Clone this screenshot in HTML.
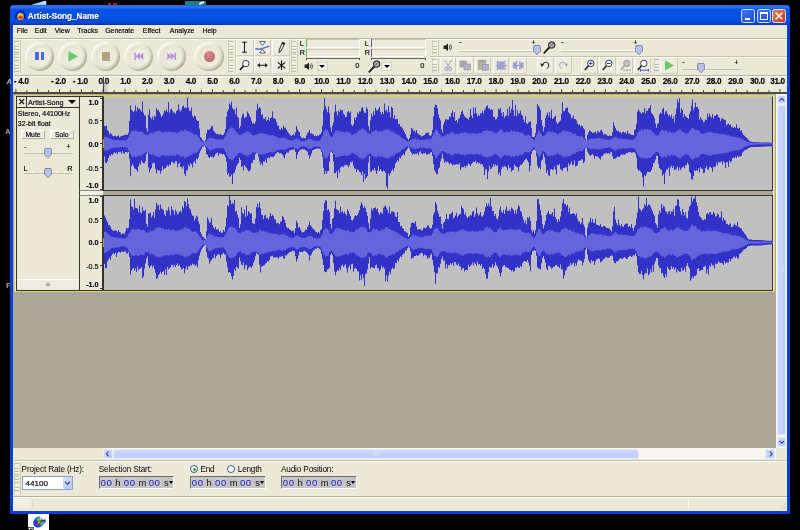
<!DOCTYPE html>
<html><head><meta charset="utf-8"><title>Artist-Song_Name</title>
<style>
html,body{margin:0;padding:0;background:#000;}
body{width:800px;height:530px;position:relative;overflow:hidden;font-family:"Liberation Sans",sans-serif;font-size:8px;color:#000;}
div,span,svg{position:absolute;box-sizing:border-box;}
.t{white-space:nowrap;line-height:1;-webkit-text-stroke:0.16px currentColor;}
.win{left:10.3px;top:5px;width:779.5px;height:508.8px;background:#0a3fd8;border-radius:4px 4px 0 0;}
.title{left:0;top:0;width:779.5px;height:20px;border-radius:4px 4px 0 0;background:linear-gradient(#1c5ce6 0%,#2f78f4 9%,#0a4ee0 24%,#0650e8 42%,#0552e6 70%,#0446d0 88%,#0336b4 100%);}
.client{left:13.2px;top:25px;width:773.8px;height:485.5px;background:#ece9d8;}
.menu span{top:28.5px;font-size:8.3px;}
.hl{height:1px;background:#b8b5a4;}
.hl2{height:1px;background:#fbfaf4;}
.grab{width:3.6px;background:repeating-linear-gradient(#bcb9a8 0px,#bcb9a8 0.8px,#faf9f2 0.8px,#faf9f2 1.6px,#ece9d8 1.6px,#ece9d8 2.7px);}
.cbtn{width:29.4px;height:29.4px;border-radius:50%;background:#ece9d8;box-shadow:inset 1.3px 1.3px 1.8px rgba(255,255,255,.95),inset -1.6px -1.6px 2.8px rgba(105,100,80,.5);}
.cbtn:after{content:"";position:absolute;left:4.6px;top:4.6px;width:20.2px;height:20.2px;border-radius:50%;background:radial-gradient(circle at 50% 50%,#f0eee2 0%,#edeadb 70%,#e9e6d6 100%);box-shadow:inset 1px 1px 2px rgba(120,115,95,.12),inset -1px -1px 2px rgba(255,255,255,.35);}
.tool{width:17.6px;height:17.2px;background:#efecdf;border:0.8px solid #cfccbb;border-top-color:#fdfdf8;border-left-color:#fdfdf8;}
.ebtn{width:16.8px;height:17.2px;background:#efecdf;border:0.8px solid #cfccbb;border-top-color:#fdfdfa;border-left-color:#fdfdfa;}
.meter{height:8.5px;background:#eeebdc;border:0.7px solid #c8c5b4;border-bottom-color:#fff;border-right-color:#fff;}
.sl{height:1px;background:#b9b6a6;}
.dd{width:11px;height:9px;background:#f3f1e7;border:0.6px solid #d6d2c2;}
.dd:after{content:"";position:absolute;left:1.9px;top:2.4px;border:3.1px solid transparent;border-top:3.6px solid #000;border-bottom:0;}
.tbox{height:12px;background:#c4c4c4;border:1px solid #77756a;border-right-color:#f8f8f4;border-bottom-color:#f8f8f4;font-size:8.6px;}
.tbox span{top:1.5px;}
.tbox .d{color:#3232c8;background:#d4d4dc;height:8.6px;}
.lbl{font-size:8.2px;}
.vr{font-size:7.6px;text-align:right;width:20px;}
.rl{font-size:7.3px;font-weight:bold;top:77.5px;letter-spacing:-0.1px}
</style></head><body><div id="root" style="left:0;top:0;width:800px;height:530px;will-change:transform">

<svg style="left:28px;top:0" width="20" height="6" viewBox="0 0 20 6"><path d="M0.6 6L6 4L12 2.2L17 0.8Q18.6 0.8 18.4 3L18 6Z" fill="#a4d2f2"/><path d="M13 2.2L17.4 1.2L17.6 3.4Z" fill="#e8f4fc"/></svg>
<div style="left:107.6px;top:2.8px;width:3px;height:2.2px;background:#b81c1c"></div><div style="left:113.4px;top:2.8px;width:3.4px;height:2.2px;background:#b81c1c"></div>
<div style="left:185px;top:0.6px;width:21px;height:4.6px;background:#1c827e"></div>
<div style="left:199px;top:1.6px;width:5px;height:1.6px;background:#e8ffff;transform:rotate(-25deg)"></div>
<div style="left:27.8px;top:514px;width:21px;height:16px;background:#fff"></div>
<svg style="left:27.8px;top:514px" width="21" height="16" viewBox="0 0 21 16"><path d="M5.2 9.6Q5 5.6 8.4 3.4Q10.4 2 12 2.6L10.4 6.2Q13 5.2 16.4 6L17.8 5.4Q18.4 7.6 16.4 9.2Q14.4 12.6 10.8 13.4Q8.6 14 7.6 12.8Q5.4 12.2 5.2 9.6Z" fill="#1d3fe0"/><path d="M8.6 4.4Q11 2.6 12.6 4.2L11.2 7Q9.6 7.6 8.4 6.6Z" fill="#3ccf58"/><path d="M11.6 9.8Q14 7 16.6 7.2Q16.4 9.6 14.2 11.2Q12.6 11.8 11.6 9.8Z" fill="#3ccf58"/><path d="M8.6 11L13.6 5.6" stroke="#e8402a" stroke-width="1.6"/><path d="M10.4 9L12 7.4" stroke="#f6c020" stroke-width="1.2"/><path d="M13.2 3.4L14.8 6.8L17.4 4.6" stroke="#30343c" stroke-width="0.6" fill="none"/><rect x="0.4" y="13.6" width="5.2" height="2.4" fill="#fff" stroke="#222" stroke-width="0.7"/><rect x="2" y="14.6" width="2.6" height="1.4" fill="#222"/></svg>
<div class="win"><div class="title"></div></div>
<div class="t" style="left:6.8px;top:78.00px;font-size:7px;color:#d0d0d0;font-style:italic;">A</div>
<div class="t" style="left:5.6px;top:128.00px;font-size:7px;color:#c0c0c0;">A</div>
<div class="t" style="left:6.2px;top:282.00px;font-size:7px;color:#d0d0d0;">F</div>
<svg style="left:14.5px;top:10px" width="11" height="11" viewBox="0 0 11 11">
<path d="M1.2 8.5 V5.5 A4.3 4.3 0 0 1 9.8 5.5 V8.5" fill="none" stroke="#0a1a9a" stroke-width="1.5"/>
<rect x="0.3" y="5.6" width="2.2" height="3.6" rx="1" fill="#10209a"/><rect x="8.5" y="5.6" width="2.2" height="3.6" rx="1" fill="#10209a"/>
<ellipse cx="5.5" cy="6.6" rx="3.2" ry="3.4" fill="#f6d21c"/><ellipse cx="5.5" cy="7.2" rx="2.5" ry="2" fill="#f0541a"/><ellipse cx="5.5" cy="7.4" rx="1.6" ry="1" fill="#e81a1a"/></svg>
<div class="t" style="left:27.8px;top:13.00px;font-size:8.15px;font-weight:bold;color:#fff;text-shadow:0.6px 0.7px 0.4px #0a2a90;">Artist-Song_Name</div>
<div style="left:741px;top:9px;width:14px;height:14px;border-radius:2.4px;border:0.75px solid #d2e0fc;background:linear-gradient(135deg,#3c78ee,#1c4ad0)"><div style="left:3px;top:8.2px;width:4.6px;height:2px;background:#fff"></div></div>
<div style="left:756.7px;top:9px;width:14px;height:14px;border-radius:2.4px;border:0.75px solid #d2e0fc;background:linear-gradient(135deg,#3c78ee,#1c4ad0)"><div style="left:2.6px;top:2.4px;width:7.4px;height:7.4px;border:0.9px solid #fff;border-top-width:2px"></div></div>
<div style="left:772px;top:9px;width:14px;height:14px;border-radius:2.4px;border:0.75px solid #d2e0fc;background:linear-gradient(135deg,#e8805a,#c8381a)"><svg style="left:2.3px;top:2.3px" width="8" height="8" viewBox="0 0 8 8"><path d="M0.7 0.7L7.3 7.3M7.3 0.7L0.7 7.3" stroke="#fff" stroke-width="1.5"/></svg></div>
<div class="client"></div>
<div class="t" style="left:16.8px;top:28.00px;font-size:6.95px;">File</div>
<div class="t" style="left:34.8px;top:28.00px;font-size:6.95px;">Edit</div>
<div class="t" style="left:54.8px;top:28.00px;font-size:6.95px;">View</div>
<div class="t" style="left:77.3px;top:28.00px;font-size:6.95px;">Tracks</div>
<div class="t" style="left:105.2px;top:28.00px;font-size:6.95px;">Generate</div>
<div class="t" style="left:142.8px;top:28.00px;font-size:6.95px;">Effect</div>
<div class="t" style="left:169.8px;top:28.00px;font-size:6.95px;">Analyze</div>
<div class="t" style="left:202.4px;top:28.00px;font-size:6.95px;">Help</div>
<div class="hl" style="left:13.5px;top:38px;width:773.5px"></div>
<div class="hl2" style="left:13.5px;top:39px;width:773.5px"></div>
<div class="hl" style="left:13.5px;top:74.8px;width:773.5px"></div>
<div class="hl2" style="left:13.5px;top:75.8px;width:773.5px"></div>
<div class="hl" style="left:430px;top:56px;width:357px;background:#c4c1b0"></div>
<div class="hl2" style="left:430px;top:57px;width:357px"></div>
<div class="grab" style="left:15px;top:41px;height:31px"></div>
<div style="left:20.2px;top:40px;width:1px;height:33px;background:#cfccbc"></div>
<div style="left:13.7px;top:40px;width:0.8px;height:33px;background:#cfccbc"></div>
<div class="grab" style="left:229.4px;top:41px;height:31px"></div>
<div style="left:234.6px;top:40px;width:1px;height:33px;background:#cfccbc"></div>
<div style="left:228.1px;top:40px;width:0.8px;height:33px;background:#cfccbc"></div>
<div class="grab" style="left:292px;top:41px;height:31px"></div>
<div style="left:297.2px;top:40px;width:1px;height:33px;background:#cfccbc"></div>
<div style="left:290.7px;top:40px;width:0.8px;height:33px;background:#cfccbc"></div>
<div class="grab" style="left:433px;top:40.6px;height:13.6px"></div>
<div style="left:438.2px;top:39.6px;width:1px;height:15.6px;background:#cfccbc"></div>
<div style="left:431.7px;top:39.6px;width:0.8px;height:15.6px;background:#cfccbc"></div>
<div class="grab" style="left:433px;top:58.8px;height:13.6px"></div>
<div style="left:438.2px;top:57.8px;width:1px;height:15.6px;background:#cfccbc"></div>
<div style="left:431.7px;top:57.8px;width:0.8px;height:15.6px;background:#cfccbc"></div>
<div class="grab" style="left:655px;top:58.8px;height:13.6px"></div>
<div style="left:660.2px;top:57.8px;width:1px;height:15.6px;background:#cfccbc"></div>
<div style="left:653.7px;top:57.8px;width:0.8px;height:15.6px;background:#cfccbc"></div>
<div class="cbtn" style="left:25.0px;top:41.6px"></div>
<div class="cbtn" style="left:58.0px;top:41.6px"></div>
<div class="cbtn" style="left:91.0px;top:41.6px"></div>
<div class="cbtn" style="left:124.0px;top:41.6px"></div>
<div class="cbtn" style="left:157.0px;top:41.6px"></div>
<div class="cbtn" style="left:194.3px;top:41.6px"></div>
<div style="left:35.3px;top:52.4px;width:3.3px;height:7.8px;background:#4668f0"></div><div style="left:40.9px;top:52.4px;width:3.3px;height:7.8px;background:#4668f0"></div>
<svg style="left:67px;top:50px" width="13" height="13" viewBox="0 0 13 13"><path d="M1.4 0.9L11.2 6.3L1.4 11.7Z" fill="#66ca68"/></svg>
<div style="left:101.6px;top:52.4px;width:8.6px;height:8.2px;background:#b2a386"></div>
<svg style="left:133px;top:51.2px" width="11.4" height="10.6" viewBox="0 0 13 11"><rect x="1.6" y="1.3" width="1.7" height="8.4" fill="#ad8fe0"/><path d="M7.6 1.3L3.3 5.5L7.6 9.7Z" fill="#ad8fe0"/><path d="M11.6 1.3L7.3 5.5L11.6 9.7Z" fill="#ad8fe0"/></svg>
<svg style="left:166.2px;top:51.2px" width="11.4" height="10.6" viewBox="0 0 13 11"><rect x="9.7" y="1.3" width="1.7" height="8.4" fill="#ad8fe0"/><path d="M5.4 1.3L9.7 5.5L5.4 9.7Z" fill="#ad8fe0"/><path d="M1.4 1.3L5.7 5.5L1.4 9.7Z" fill="#ad8fe0"/></svg>
<div style="left:204.3px;top:51.4px;width:10.4px;height:10.4px;border-radius:50%;background:radial-gradient(circle at 40% 35%,#cf8a8e,#c4737a 60%,#b8666e)"></div>
<div class="tool" style="left:236px;top:38.8px"></div>
<div class="tool" style="left:253.9px;top:38.8px"></div>
<div class="tool" style="left:272.2px;top:38.8px"></div>
<div class="tool" style="left:236px;top:56.7px"></div>
<div class="tool" style="left:253.9px;top:56.7px"></div>
<div class="tool" style="left:272.2px;top:56.7px"></div>
<svg style="left:236.3px;top:39.4px" width="17" height="16.5" viewBox="0 0 17 16.5"><path d="M6.2 3.2H10.8M6.2 13.2H10.8M8.5 3.2V13.2" stroke="#111" stroke-width="1" fill="none"/></svg>
<svg style="left:254.3px;top:39.2px" width="17" height="16.5" viewBox="0 0 17 16.5"><path d="M5.6 2.6H11.4L8.5 6.4ZM5.6 14H11.4L8.5 10.4Z" fill="#fff" stroke="#222" stroke-width="0.7"/><path d="M1.3 9.8L6 10.2L15.5 7.2" stroke="#5a6ee6" stroke-width="1.4" fill="none"/></svg>
<svg style="left:272.6px;top:39.4px" width="17" height="16.5" viewBox="0 0 17 16.5"><path d="M9.6 3.2L11.8 4.4L8 12L6 13.6L6.2 11Z" fill="#fff" stroke="#111" stroke-width="0.9"/><path d="M9.6 3.2L11.8 4.4L11 6L8.8 4.8Z" fill="#111"/></svg>
<svg style="left:236.3px;top:57.2px" width="17" height="16.5" viewBox="0 0 17 16.5"><circle cx="9.8" cy="6.6" r="3.2" fill="#fff" stroke="#222" stroke-width="0.9"/><path d="M7.5 9L4 13" stroke="#111" stroke-width="1.6"/></svg>
<svg style="left:254.3px;top:57.2px" width="17" height="16.5" viewBox="0 0 17 16.5"><path d="M4.4 8.3H12.6" stroke="#111" stroke-width="1"/><path d="M3.2 8.3L6 6V10.6ZM13.8 8.3L11 6V10.6Z" fill="#111"/></svg>
<svg style="left:272.6px;top:57.2px" width="17" height="16.5" viewBox="0 0 17 16.5"><path d="M8.5 3.6V13M4.8 5.4L12.2 11.2M12.2 5.4L4.8 11.2" stroke="#111" stroke-width="1.1"/></svg>
<div class="t" style="left:299.8px;top:40.00px;font-size:7.2px;">L</div>
<div class="t" style="left:299.8px;top:49.00px;font-size:7.2px;">R</div>
<div class="meter" style="left:306px;top:39px;width:54.4px"></div><div class="meter" style="left:306px;top:48.6px;width:54.4px"></div>
<div style="left:306px;top:39.3px;width:1px;height:8px;background:#58b858"></div><div style="left:306px;top:48.9px;width:1px;height:8px;background:#58b858"></div>
<div class="sl" style="left:306px;top:58px;width:54.4px;background:#66645a"></div><div style="left:306px;top:58px;width:1px;height:2px;background:#55534a"></div><div style="left:359.4px;top:58px;width:1px;height:2px;background:#55534a"></div>
<div class="t" style="left:355.2px;top:62.00px;font-size:7.4px;">0</div>
<div class="t" style="left:364.8px;top:40.00px;font-size:7.2px;">L</div>
<div class="t" style="left:364.8px;top:49.00px;font-size:7.2px;">R</div>
<div class="meter" style="left:371px;top:39px;width:54.7px"></div><div class="meter" style="left:371px;top:48.6px;width:54.7px"></div>
<div style="left:371px;top:39.3px;width:1px;height:8px;background:#7848b8"></div><div style="left:371px;top:48.9px;width:1px;height:8px;background:#7848b8"></div>
<div class="sl" style="left:371px;top:58px;width:54.7px;background:#66645a"></div><div style="left:371px;top:58px;width:1px;height:2px;background:#55534a"></div><div style="left:424.7px;top:58px;width:1px;height:2px;background:#55534a"></div>
<div class="t" style="left:420.2px;top:62.00px;font-size:7.4px;">0</div>
<svg style="left:303.5px;top:61px" width="10" height="11" viewBox="0 0 10 11"><path d="M0.6 3.6H2.6L5 1.4V9.2L2.6 7H0.6Z" fill="#222"/><path d="M6.2 3.6Q7.2 5.3 6.2 7M7.6 2.4Q9.4 5.3 7.6 8.2" stroke="#222" stroke-width="0.8" fill="none"/></svg>
<div class="dd" style="left:316.6px;top:62px"></div>
<svg style="left:367.5px;top:60px" width="13" height="13" viewBox="0 0 13 13"><path d="M0.8 12.4L5.8 6.9" stroke="#111" stroke-width="1.6"/><path d="M4.2 7.4L6.4 5.2L7.8 6.6L5.6 8.8Z" fill="#222"/><circle cx="8.7" cy="4" r="3.3" fill="#8e8e8e" stroke="#1e1e1e" stroke-width="0.9"/><path d="M6.8 3L9.6 5.8M7.8 2L10.6 4.8M6.6 4.8L8 6.2" stroke="#e8e8e8" stroke-width="0.55"/><path d="M7 5.4L10.2 2.2" stroke="#444" stroke-width="0.5"/></svg>
<div class="dd" style="left:381px;top:62px"></div>
<svg style="left:442.8px;top:42.4px" width="10" height="11" viewBox="0 0 10 11"><path d="M0.6 3.6H2.6L5 1.4V9.2L2.6 7H0.6Z" fill="#222"/><path d="M6.2 3.6Q7.2 5.3 6.2 7M7.6 2.4Q9.4 5.3 7.6 8.2" stroke="#222" stroke-width="0.8" fill="none"/></svg>
<div class="sl" style="left:459px;top:50.4px;width:82px;height:1.2px;background:linear-gradient(#fbfaf4 0,#fbfaf4 45%,#c4c1b0 46%,#c4c1b0 100%)"></div>
<div style="left:459px;top:48.8px;width:82px;height:1.6px;background:repeating-linear-gradient(90deg,#fbfaf4 0,#fbfaf4 0.9px,transparent 0.9px,transparent 8px)"></div>
<svg style="left:533px;top:44.6px" width="8" height="10.4" viewBox="0 0 8 10.4"><path d="M0.6 1.6Q0.6 0.5 1.8 0.5H6.2Q7.4 0.5 7.4 1.6V6.2L4 9.8L0.6 6.2Z" fill="#bcc3ea" stroke="#7078a6" stroke-width="0.85"/></svg>
<div class="t" style="left:459px;top:38.00px;font-size:8px;">-</div>
<div class="t" style="left:531.6px;top:40.00px;font-size:6.6px;">+</div>
<svg style="left:542.5px;top:41px" width="13" height="13" viewBox="0 0 13 13"><path d="M0.8 12.4L5.8 6.9" stroke="#111" stroke-width="1.6"/><path d="M4.2 7.4L6.4 5.2L7.8 6.6L5.6 8.8Z" fill="#222"/><circle cx="8.7" cy="4" r="3.3" fill="#8e8e8e" stroke="#1e1e1e" stroke-width="0.9"/><path d="M6.8 3L9.6 5.8M7.8 2L10.6 4.8M6.6 4.8L8 6.2" stroke="#e8e8e8" stroke-width="0.55"/><path d="M7 5.4L10.2 2.2" stroke="#444" stroke-width="0.5"/></svg>
<div class="sl" style="left:561px;top:50.4px;width:80px;height:1.2px;background:linear-gradient(#fbfaf4 0,#fbfaf4 45%,#c4c1b0 46%,#c4c1b0 100%)"></div>
<div style="left:561px;top:48.8px;width:80px;height:1.6px;background:repeating-linear-gradient(90deg,#fbfaf4 0,#fbfaf4 0.9px,transparent 0.9px,transparent 8px)"></div>
<svg style="left:634.5px;top:44.6px" width="8" height="10.4" viewBox="0 0 8 10.4"><path d="M0.6 1.6Q0.6 0.5 1.8 0.5H6.2Q7.4 0.5 7.4 1.6V6.2L4 9.8L0.6 6.2Z" fill="#bcc3ea" stroke="#7078a6" stroke-width="0.85"/></svg>
<div class="t" style="left:561px;top:38.00px;font-size:8px;">-</div>
<div class="t" style="left:633.4px;top:40.00px;font-size:6.6px;">+</div>
<div class="ebtn" style="left:439.6px;top:56.8px"></div>
<div class="ebtn" style="left:456.9px;top:56.8px"></div>
<div class="ebtn" style="left:474.7px;top:56.8px"></div>
<div class="ebtn" style="left:492.5px;top:56.8px"></div>
<div class="ebtn" style="left:509.9px;top:56.8px"></div>
<div class="ebtn" style="left:537.4px;top:56.8px"></div>
<div class="ebtn" style="left:554.8px;top:56.8px"></div>
<div class="ebtn" style="left:581.4px;top:56.8px"></div>
<div class="ebtn" style="left:598.8px;top:56.8px"></div>
<div class="ebtn" style="left:616.6px;top:56.8px"></div>
<div class="ebtn" style="left:634.2px;top:56.8px"></div>
<svg style="left:439.6px;top:57px;opacity:0.8" width="16.5" height="17" viewBox="0 0 16.5 17"><path d="M5 3.4L9.4 10.6M11.2 3.4L6.8 10.6" stroke="#8a8aa0" stroke-width="0.9"/><circle cx="6.2" cy="12" r="1.6" fill="none" stroke="#7a7ac8" stroke-width="0.9"/><circle cx="10.2" cy="12" r="1.6" fill="none" stroke="#7a7ac8" stroke-width="0.9"/><path d="M9 5L13 3.8" stroke="#999" stroke-width="0.6"/></svg>
<svg style="left:456.9px;top:57px;opacity:0.8" width="16.5" height="17" viewBox="0 0 16.5 17"><rect x="3" y="4" width="6.4" height="6" fill="#9a9aae" stroke="#77778a" stroke-width="0.6"/><rect x="7" y="7" width="6.4" height="6" fill="#a4a4cc" stroke="#77778a" stroke-width="0.6"/></svg>
<svg style="left:474.7px;top:57px;opacity:0.8" width="16.5" height="17" viewBox="0 0 16.5 17"><rect x="3.2" y="3.6" width="7.6" height="8.6" fill="#a8a48e" stroke="#77756a" stroke-width="0.6"/><rect x="5.2" y="2.8" width="3.6" height="1.8" fill="#888"/><rect x="7.4" y="7.4" width="6" height="6.2" fill="#a4a4cc" stroke="#77778a" stroke-width="0.6"/></svg>
<svg style="left:492.5px;top:57px;opacity:0.8" width="16.5" height="17" viewBox="0 0 16.5 17"><path d="M2.4 8.5H14" stroke="#7a7ac8" stroke-width="0.8"/><rect x="5.2" y="4.4" width="6" height="8.2" fill="#8c8cd0"/><path d="M4.4 3.6V13.4M12 3.6V13.4" stroke="#6a6aa8" stroke-width="0.8"/></svg>
<svg style="left:509.9px;top:57px;opacity:0.8" width="16.5" height="17" viewBox="0 0 16.5 17"><path d="M2.4 8.5H14" stroke="#7a7ac8" stroke-width="0.8"/><rect x="3" y="5.4" width="3" height="6.2" fill="#8c8cd0"/><rect x="10.4" y="5.4" width="3" height="6.2" fill="#8c8cd0"/><path d="M6.6 3.8V13.2M9.8 3.8V13.2" stroke="#6a6aa8" stroke-width="0.8"/></svg>
<svg style="left:537.4px;top:57px;opacity:1" width="16.5" height="17" viewBox="0 0 16.5 17"><path d="M5.4 8.2Q6.2 4.8 9.4 5.2Q12.4 5.8 11.8 9Q11.4 11 9.6 11.6" fill="none" stroke="#222" stroke-width="1"/><path d="M3.4 6.2L7 7.4L4.6 10Z" fill="#222"/></svg>
<svg style="left:554.8px;top:57px;opacity:1" width="16.5" height="17" viewBox="0 0 16.5 17"><path d="M11 8.2Q10.2 4.8 7 5.2Q4 5.8 4.6 9Q5 11 6.8 11.6" fill="none" stroke="#a8a8b0" stroke-width="1"/><path d="M13 6.2L9.4 7.4L11.8 10Z" fill="#a8a8b0"/></svg>
<svg style="left:581.4px;top:57px;opacity:1" width="16.5" height="17" viewBox="0 0 16.5 17"><circle cx="9.8" cy="6.4" r="3.2" fill="#fff" stroke="#222" stroke-width="0.9"/><path d="M7.5 8.8L3.8 13" stroke="#222" stroke-width="1.6"/><path d="M8 6.4H11.6M9.8 4.6V8.2" stroke="#2a3ad0" stroke-width="1"/></svg>
<svg style="left:598.8px;top:57px;opacity:1" width="16.5" height="17" viewBox="0 0 16.5 17"><circle cx="9.8" cy="6.4" r="3.2" fill="#fff" stroke="#222" stroke-width="0.9"/><path d="M7.5 8.8L3.8 13" stroke="#222" stroke-width="1.6"/><path d="M8 6.4H11.6" stroke="#2a3ad0" stroke-width="1.1"/></svg>
<svg style="left:616.6px;top:57px;opacity:1" width="16.5" height="17" viewBox="0 0 16.5 17"><circle cx="9.8" cy="6.4" r="3.2" fill="#c2c2c2" stroke="#9c9c9c" stroke-width="0.9"/><path d="M7.5 8.8L3.8 13" stroke="#a2a2a2" stroke-width="1.6"/><path d="M7 13.2H13.4M7 12.2V14.2M13.4 12.2V14.2M9.6 12.2L10.8 13.2L9.6 14.2" stroke="#9a9a9a" stroke-width="0.6" fill="none"/></svg>
<svg style="left:634.2px;top:57px;opacity:1" width="16.5" height="17" viewBox="0 0 16.5 17"><circle cx="9.8" cy="6.4" r="3.2" fill="#fff" stroke="#222" stroke-width="0.9"/><path d="M7.5 8.8L3.8 13" stroke="#222" stroke-width="1.6"/><path d="M6.4 13.2H14.4M6.4 11.8V14.6M14.4 11.8V14.6" stroke="#2a3ad0" stroke-width="0.9" fill="none"/></svg>
<div class="ebtn" style="left:660.3px;top:56.8px;width:17.3px"></div>
<svg style="left:661px;top:57.4px" width="16.5" height="17" viewBox="0 0 16.5 17"><path d="M4 3.6L13.2 8.5L4 13.4Z" fill="#66ca68"/></svg>
<div class="sl" style="left:681.5px;top:68.7px;width:59.5px;height:1.2px;background:linear-gradient(#fbfaf4 0,#fbfaf4 45%,#c4c1b0 46%,#c4c1b0 100%)"></div>
<div style="left:681.5px;top:67.10000000000001px;width:59.5px;height:1.6px;background:repeating-linear-gradient(90deg,#fbfaf4 0,#fbfaf4 0.9px,transparent 0.9px,transparent 8px)"></div>
<svg style="left:697px;top:62.9px" width="8" height="10.4" viewBox="0 0 8 10.4"><path d="M0.6 1.6Q0.6 0.5 1.8 0.5H6.2Q7.4 0.5 7.4 1.6V6.2L4 9.8L0.6 6.2Z" fill="#bcc3ea" stroke="#7078a6" stroke-width="0.85"/></svg>
<div class="t" style="left:682px;top:58.00px;font-size:8px;">-</div>
<div class="t" style="left:734.4px;top:60.00px;font-size:6.6px;">+</div>
<div class="t" style="left:13.8px;top:78.00px;font-size:8.2px;font-weight:bold;letter-spacing:-0.3px;">- 4.0</div>
<div class="t" style="left:50.940000000000005px;top:78.00px;font-size:8.2px;font-weight:bold;letter-spacing:-0.3px;">- 2.0</div>
<div class="t" style="left:72.77000000000001px;top:78.00px;font-size:8.2px;font-weight:bold;letter-spacing:-0.3px;">- 1.0</div>
<div class="t" style="left:88.7px;top:78.00px;font-size:8.2px;font-weight:bold;width:30px;text-align:center;letter-spacing:-0.3px;">0.0</div>
<div class="t" style="left:110.5px;top:78.00px;font-size:8.2px;font-weight:bold;width:30px;text-align:center;letter-spacing:-0.3px;">1.0</div>
<div class="t" style="left:132.3px;top:78.00px;font-size:8.2px;font-weight:bold;width:30px;text-align:center;letter-spacing:-0.3px;">2.0</div>
<div class="t" style="left:154.1px;top:78.00px;font-size:8.2px;font-weight:bold;width:30px;text-align:center;letter-spacing:-0.3px;">3.0</div>
<div class="t" style="left:175.9px;top:78.00px;font-size:8.2px;font-weight:bold;width:30px;text-align:center;letter-spacing:-0.3px;">4.0</div>
<div class="t" style="left:197.6px;top:78.00px;font-size:8.2px;font-weight:bold;width:30px;text-align:center;letter-spacing:-0.3px;">5.0</div>
<div class="t" style="left:219.4px;top:78.00px;font-size:8.2px;font-weight:bold;width:30px;text-align:center;letter-spacing:-0.3px;">6.0</div>
<div class="t" style="left:241.2px;top:78.00px;font-size:8.2px;font-weight:bold;width:30px;text-align:center;letter-spacing:-0.3px;">7.0</div>
<div class="t" style="left:263.0px;top:78.00px;font-size:8.2px;font-weight:bold;width:30px;text-align:center;letter-spacing:-0.3px;">8.0</div>
<div class="t" style="left:284.8px;top:78.00px;font-size:8.2px;font-weight:bold;width:30px;text-align:center;letter-spacing:-0.3px;">9.0</div>
<div class="t" style="left:306.6px;top:78.00px;font-size:8.2px;font-weight:bold;width:30px;text-align:center;letter-spacing:-0.3px;">10.0</div>
<div class="t" style="left:328.4px;top:78.00px;font-size:8.2px;font-weight:bold;width:30px;text-align:center;letter-spacing:-0.3px;">11.0</div>
<div class="t" style="left:350.2px;top:78.00px;font-size:8.2px;font-weight:bold;width:30px;text-align:center;letter-spacing:-0.3px;">12.0</div>
<div class="t" style="left:372.0px;top:78.00px;font-size:8.2px;font-weight:bold;width:30px;text-align:center;letter-spacing:-0.3px;">13.0</div>
<div class="t" style="left:393.8px;top:78.00px;font-size:8.2px;font-weight:bold;width:30px;text-align:center;letter-spacing:-0.3px;">14.0</div>
<div class="t" style="left:415.5px;top:78.00px;font-size:8.2px;font-weight:bold;width:30px;text-align:center;letter-spacing:-0.3px;">15.0</div>
<div class="t" style="left:437.3px;top:78.00px;font-size:8.2px;font-weight:bold;width:30px;text-align:center;letter-spacing:-0.3px;">16.0</div>
<div class="t" style="left:459.1px;top:78.00px;font-size:8.2px;font-weight:bold;width:30px;text-align:center;letter-spacing:-0.3px;">17.0</div>
<div class="t" style="left:480.9px;top:78.00px;font-size:8.2px;font-weight:bold;width:30px;text-align:center;letter-spacing:-0.3px;">18.0</div>
<div class="t" style="left:502.7px;top:78.00px;font-size:8.2px;font-weight:bold;width:30px;text-align:center;letter-spacing:-0.3px;">19.0</div>
<div class="t" style="left:524.5px;top:78.00px;font-size:8.2px;font-weight:bold;width:30px;text-align:center;letter-spacing:-0.3px;">20.0</div>
<div class="t" style="left:546.3px;top:78.00px;font-size:8.2px;font-weight:bold;width:30px;text-align:center;letter-spacing:-0.3px;">21.0</div>
<div class="t" style="left:568.1px;top:78.00px;font-size:8.2px;font-weight:bold;width:30px;text-align:center;letter-spacing:-0.3px;">22.0</div>
<div class="t" style="left:589.9px;top:78.00px;font-size:8.2px;font-weight:bold;width:30px;text-align:center;letter-spacing:-0.3px;">23.0</div>
<div class="t" style="left:611.7px;top:78.00px;font-size:8.2px;font-weight:bold;width:30px;text-align:center;letter-spacing:-0.3px;">24.0</div>
<div class="t" style="left:633.5px;top:78.00px;font-size:8.2px;font-weight:bold;width:30px;text-align:center;letter-spacing:-0.3px;">25.0</div>
<div class="t" style="left:655.2px;top:78.00px;font-size:8.2px;font-weight:bold;width:30px;text-align:center;letter-spacing:-0.3px;">26.0</div>
<div class="t" style="left:677.0px;top:78.00px;font-size:8.2px;font-weight:bold;width:30px;text-align:center;letter-spacing:-0.3px;">27.0</div>
<div class="t" style="left:698.8px;top:78.00px;font-size:8.2px;font-weight:bold;width:30px;text-align:center;letter-spacing:-0.3px;">28.0</div>
<div class="t" style="left:720.6px;top:78.00px;font-size:8.2px;font-weight:bold;width:30px;text-align:center;letter-spacing:-0.3px;">29.0</div>
<div class="t" style="left:742.4px;top:78.00px;font-size:8.2px;font-weight:bold;width:30px;text-align:center;letter-spacing:-0.3px;">30.0</div>
<div class="t" style="left:762.5px;top:78.00px;font-size:8.2px;font-weight:bold;width:30px;text-align:center;letter-spacing:-0.3px;">31.0</div>
<svg style="left:0;top:0" width="800" height="100" viewBox="0 0 800 100"><path d="M15.88 89.1V92.3M26.80 90.1V92.3M37.71 89.1V92.3M48.63 90.1V92.3M59.54 89.1V92.3M70.46 90.1V92.3M81.37 89.1V92.3M92.28 90.1V92.3M103.20 89.1V92.3M114.12 90.1V92.3M125.03 89.1V92.3M135.94 90.1V92.3M146.86 89.1V92.3M157.78 90.1V92.3M168.69 89.1V92.3M179.61 90.1V92.3M190.52 89.1V92.3M201.44 90.1V92.3M212.35 89.1V92.3M223.26 90.1V92.3M234.18 89.1V92.3M245.09 90.1V92.3M256.01 89.1V92.3M266.93 90.1V92.3M277.84 89.1V92.3M288.75 90.1V92.3M299.67 89.1V92.3M310.58 90.1V92.3M321.50 89.1V92.3M332.41 90.1V92.3M343.33 89.1V92.3M354.25 90.1V92.3M365.16 89.1V92.3M376.07 90.1V92.3M386.99 89.1V92.3M397.90 90.1V92.3M408.82 89.1V92.3M419.73 90.1V92.3M430.65 89.1V92.3M441.56 90.1V92.3M452.48 89.1V92.3M463.39 90.1V92.3M474.31 89.1V92.3M485.22 90.1V92.3M496.14 89.1V92.3M507.05 90.1V92.3M517.97 89.1V92.3M528.88 90.1V92.3M539.80 89.1V92.3M550.72 90.1V92.3M561.63 89.1V92.3M572.54 90.1V92.3M583.46 89.1V92.3M594.38 90.1V92.3M605.29 89.1V92.3M616.21 90.1V92.3M627.12 89.1V92.3M638.03 90.1V92.3M648.95 89.1V92.3M659.87 90.1V92.3M670.78 89.1V92.3M681.70 90.1V92.3M692.61 89.1V92.3M703.52 90.1V92.3M714.44 89.1V92.3M725.36 90.1V92.3M736.27 89.1V92.3M747.18 90.1V92.3M758.10 89.1V92.3M769.01 90.1V92.3M779.93 89.1V92.3" stroke="#26261f" stroke-width="0.85" fill="none"/><path d="M104.2 84.2L107.6 84.2V91.8L104.2 91.8Z" fill="#b4b4b0"/><path d="M104 88L107.4 84.6V91.6Z" fill="#d6d6d2"/><path d="M103.4 77V92" stroke="#333" stroke-width="1"/></svg>
<div style="left:13.2px;top:92px;width:773.8px;height:2.2px;background:#4e4c44"></div>
<div style="left:13.2px;top:94.2px;width:763.4px;height:354px;background:#aca899"></div>
<div style="left:14.4px;top:94.7px;width:760.3px;height:197.7px;background:#ece9d8;border:1.7px solid #dcd66c"></div>
<div style="left:16.2px;top:96.4px;width:63.4px;height:194.4px;border:1px solid #34342e;border-bottom-width:1.9px;background:#ece9d8"></div>
<div style="left:16.2px;top:96.4px;width:63.4px;height:11.2px;border:1px solid #34342e"></div>
<div style="left:26.4px;top:96.4px;width:1px;height:11.2px;background:#34342e"></div>
<svg style="left:17.2px;top:97.4px" width="9.2" height="9.2" viewBox="0 0 9.2 9.2"><path d="M2.3 2.1L7.1 7.1M7.1 2.1L2.3 7.1" stroke="#111" stroke-width="1.3"/></svg>
<div class="t" style="left:28px;top:99.00px;font-size:7.2px;">Artist-Song</div>
<div style="left:67.6px;top:100.2px;width:0;height:0;border:4.1px solid transparent;border-top:4.4px solid #000;border-bottom:0"></div>
<div class="t" style="left:17.8px;top:110.00px;font-size:7.0px;">Stereo, 44100Hz</div>
<div class="t" style="left:17.8px;top:120.00px;font-size:7.05px;">32-bit float</div>
<div style="left:21px;top:129.8px;width:24px;height:9.6px;background:#efede2;border:0.8px solid #fffffc;border-right-color:#b4b1a0;border-bottom-color:#b4b1a0"></div>
<div class="t" style="left:21px;top:132.00px;font-size:6.8px;width:24px;text-align:center;">Mute</div>
<div style="left:49.8px;top:129.8px;width:24px;height:9.6px;background:#efede2;border:0.8px solid #fffffc;border-right-color:#b4b1a0;border-bottom-color:#b4b1a0"></div>
<div class="t" style="left:49.8px;top:132.00px;font-size:6.8px;width:24px;text-align:center;">Solo</div>
<div class="sl" style="left:23.6px;top:152.6px;width:49px;height:1.2px;background:linear-gradient(#fbfaf4 0,#fbfaf4 45%,#c4c1b0 46%,#c4c1b0 100%)"></div>
<div style="left:23.6px;top:151.0px;width:49px;height:1.6px;background:repeating-linear-gradient(90deg,#fbfaf4 0,#fbfaf4 0.9px,transparent 0.9px,transparent 8px)"></div>
<svg style="left:44.2px;top:147.8px" width="8" height="10.4" viewBox="0 0 8 10.4"><path d="M0.6 1.6Q0.6 0.5 1.8 0.5H6.2Q7.4 0.5 7.4 1.6V6.2L4 9.8L0.6 6.2Z" fill="#bcc3ea" stroke="#7078a6" stroke-width="0.85"/></svg>
<div class="t" style="left:24.2px;top:143.00px;font-size:7px;">-</div>
<div class="t" style="left:66.6px;top:144.00px;font-size:6.6px;">+</div>
<div class="sl" style="left:23.6px;top:172.8px;width:49px;height:1.2px;background:linear-gradient(#fbfaf4 0,#fbfaf4 45%,#c4c1b0 46%,#c4c1b0 100%)"></div>
<div style="left:23.6px;top:171.20000000000002px;width:49px;height:1.6px;background:repeating-linear-gradient(90deg,#fbfaf4 0,#fbfaf4 0.9px,transparent 0.9px,transparent 8px)"></div>
<svg style="left:44.2px;top:168.0px" width="8" height="10.4" viewBox="0 0 8 10.4"><path d="M0.6 1.6Q0.6 0.5 1.8 0.5H6.2Q7.4 0.5 7.4 1.6V6.2L4 9.8L0.6 6.2Z" fill="#bcc3ea" stroke="#7078a6" stroke-width="0.85"/></svg>
<div class="t" style="left:23.6px;top:165.00px;font-size:7.4px;">L</div>
<div class="t" style="left:67.2px;top:165.00px;font-size:7.4px;">R</div>
<div style="left:17.2px;top:279.4px;width:61.4px;height:9.6px;background:#efede2;border-top:0.9px solid #fdfdf8"></div>
<div style="left:44.6px;top:282px;width:0;height:0;border:3.1px solid transparent;border-bottom:4.4px solid #a9a9a4;border-top:0"></div>
<div style="left:78.6px;top:96.4px;width:24.4px;height:94.8px;border:1px solid #34342e;border-bottom:0.8px solid #8e8c80;background:#ece9d8"></div>
<div style="left:78.6px;top:194.6px;width:24.4px;height:96.2px;border:1px solid #34342e;border-bottom-width:1.9px;border-top:0.8px solid #8e8c80;background:#ece9d8"></div>
<div style="left:79.6px;top:191.2px;width:23.4px;height:3.4px;background:#f4f2e8"></div>
<div class="t" style="left:77.6px;top:99.00px;font-size:7.2px;font-weight:bold;width:21px;text-align:right;">1.0</div>
<div class="t" style="left:77.6px;top:118.00px;font-size:7.2px;width:21px;text-align:right;">0.5</div>
<div class="t" style="left:77.6px;top:141.00px;font-size:7.2px;font-weight:bold;width:21px;text-align:right;">0.0</div>
<div class="t" style="left:77.6px;top:165.00px;font-size:7.2px;width:21px;text-align:right;">-0.5</div>
<div class="t" style="left:77.6px;top:182.00px;font-size:7.2px;font-weight:bold;width:21px;text-align:right;">-1.0</div>
<div style="left:100.4px;top:97.6px;width:1.8px;height:0.9px;background:#333"></div>
<div style="left:100.4px;top:119.9px;width:1.8px;height:0.9px;background:#333"></div>
<div style="left:100.4px;top:143.2px;width:1.8px;height:0.9px;background:#333"></div>
<div style="left:100.4px;top:166.5px;width:1.8px;height:0.9px;background:#333"></div>
<div style="left:100.4px;top:188.8px;width:1.8px;height:0.9px;background:#333"></div>
<div class="t" style="left:77.6px;top:197.00px;font-size:7.2px;font-weight:bold;width:21px;text-align:right;">1.0</div>
<div class="t" style="left:77.6px;top:217.00px;font-size:7.2px;width:21px;text-align:right;">0.5</div>
<div class="t" style="left:77.6px;top:239.00px;font-size:7.2px;font-weight:bold;width:21px;text-align:right;">0.0</div>
<div class="t" style="left:77.6px;top:263.00px;font-size:7.2px;width:21px;text-align:right;">-0.5</div>
<div class="t" style="left:77.6px;top:281.00px;font-size:7.2px;font-weight:bold;width:21px;text-align:right;">-1.0</div>
<div style="left:100.4px;top:195.8px;width:1.8px;height:0.9px;background:#333"></div>
<div style="left:100.4px;top:218.2px;width:1.8px;height:0.9px;background:#333"></div>
<div style="left:100.4px;top:241.7px;width:1.8px;height:0.9px;background:#333"></div>
<div style="left:100.4px;top:265.2px;width:1.8px;height:0.9px;background:#333"></div>
<div style="left:100.4px;top:287.6px;width:1.8px;height:0.9px;background:#333"></div>
<div style="left:102.9px;top:96.4px;width:670.2px;height:94.8px;background:#c0c0c0;border:1px solid #34342e;border-right-width:1.2px;border-top:0.6px solid #d4ce72"></div>
<div style="left:102.9px;top:194.6px;width:670.2px;height:96.2px;background:#c0c0c0;border:1px solid #34342e;border-bottom-width:1.9px;border-right-width:1.2px"></div>
<div style="left:103.4px;top:191.2px;width:670px;height:3.4px;background:#aca899"></div>
<svg style="left:0;top:0" width="800" height="300" viewBox="0 0 800 300"><g fill="none" stroke-width="1.04"><path d="M104.5 125.9V156.6M105.5 126.4V162.8M106.5 125.5V162.9M107.5 129.9V161.2M108.5 131.2V158.0M109.5 134.2V155.4M110.5 133.0V155.7M111.5 134.2V154.1M112.5 135.6V155.0M113.5 136.3V153.2M114.5 136.1V152.3M115.5 135.6V153.2M116.5 136.8V152.4M117.5 136.1V154.0M118.5 135.3V151.9M119.5 137.3V151.7M120.5 136.4V151.8M121.5 136.1V153.7M122.5 135.6V150.9M123.5 135.7V153.3M124.5 135.0V153.7M125.5 134.8V152.0M126.5 134.7V152.0M127.5 134.8V152.7M128.5 132.7V152.0M129.5 121.0V159.0M130.5 105.4V176.3M131.5 109.9V166.3M132.5 110.7V163.7M133.5 112.3V165.9M134.5 110.8V168.4M135.5 105.4V168.9M136.5 111.2V169.9M137.5 107.2V171.6M138.5 109.3V166.6M139.5 108.2V163.4M140.5 110.3V164.7M141.5 111.7V160.6M142.5 101.4V162.2M143.5 112.8V163.3M144.5 115.4V163.3M145.5 115.5V160.9M146.5 128.2V154.2M147.5 131.8V153.1M148.5 114.8V167.6M149.5 109.2V172.6M150.5 117.3V169.4M151.5 119.3V167.9M152.5 116.6V163.5M153.5 119.8V162.7M154.5 115.7V163.3M155.5 116.8V168.7M156.5 108.3V173.3M157.5 110.3V169.8M158.5 110.2V170.7M159.5 112.3V170.3M160.5 114.3V173.7M161.5 117.1V171.1M162.5 115.4V166.2M163.5 113.4V169.4M164.5 110.6V168.5M165.5 111.2V167.9M166.5 109.6V166.5M167.5 111.9V165.2M168.5 101.9V166.5M169.5 112.7V164.6M170.5 109.5V165.1M171.5 108.4V162.0M172.5 111.0V161.6M173.5 112.6V163.2M174.5 112.8V163.6M175.5 113.7V161.2M176.5 111.1V161.2M177.5 110.0V167.3M178.5 104.2V163.9M179.5 109.8V162.7M180.5 111.5V167.1M181.5 109.5V166.9M182.5 106.2V168.8M183.5 105.6V165.9M184.5 107.9V173.8M185.5 107.3V176.1M186.5 107.9V170.5M187.5 97.5V170.3M188.5 107.8V164.8M189.5 110.5V166.5M190.5 111.3V163.2M191.5 107.6V164.3M192.5 115.7V167.6M193.5 117.5V162.6M194.5 115.4V160.9M195.5 116.2V163.5M196.5 119.7V158.7M197.5 121.0V159.3M198.5 121.0V157.2M199.5 128.8V153.2M200.5 136.9V150.8M201.5 138.0V148.8M202.5 139.9V147.0M203.5 140.7V146.3M204.5 141.9V145.6M205.5 139.5V147.8M206.5 133.4V153.9M207.5 129.7V154.7M208.5 130.1V156.9M209.5 129.6V158.0M210.5 128.4V156.3M211.5 126.5V157.1M212.5 126.1V156.4M213.5 130.5V157.5M214.5 131.4V156.2M215.5 133.2V154.0M216.5 134.0V153.2M217.5 133.8V152.4M218.5 134.5V156.1M219.5 134.7V153.1M220.5 133.8V153.8M221.5 135.0V153.9M222.5 135.3V154.4M223.5 134.4V154.0M224.5 132.7V155.1M225.5 128.9V157.0M226.5 116.7V161.7M227.5 111.4V174.8M228.5 109.3V173.1M229.5 103.6V176.8M230.5 104.9V176.3M231.5 101.5V174.5M232.5 108.1V184.1M233.5 110.0V173.5M234.5 109.0V172.6M235.5 114.4V169.4M236.5 107.5V165.9M237.5 116.8V164.4M238.5 117.7V162.9M239.5 128.2V157.5M240.5 126.0V160.1M241.5 117.7V167.0M242.5 114.5V166.1M243.5 113.5V170.6M244.5 118.1V164.9M245.5 117.6V166.7M246.5 116.4V167.7M247.5 111.6V169.8M248.5 113.2V171.3M249.5 115.5V170.9M250.5 117.5V169.6M251.5 120.8V163.2M252.5 123.6V162.5M253.5 123.0V159.7M254.5 123.9V159.8M255.5 121.6V154.3M256.5 110.6V153.3M257.5 103.8V153.3M258.5 108.8V156.8M259.5 107.1V161.2M260.5 108.6V164.8M261.5 115.1V163.3M262.5 114.2V165.5M263.5 118.5V161.6M264.5 119.1V161.8M265.5 116.9V159.4M266.5 120.8V163.1M267.5 119.9V158.1M268.5 117.2V157.6M269.5 121.1V158.6M270.5 118.0V156.4M271.5 117.5V156.8M272.5 111.3V156.9M273.5 118.4V156.7M274.5 118.2V155.9M275.5 119.0V153.8M276.5 122.1V153.3M277.5 125.5V152.1M278.5 125.6V152.4M279.5 129.3V153.5M280.5 129.7V153.3M281.5 127.7V153.5M282.5 129.3V154.4M283.5 125.7V156.4M284.5 127.4V158.3M285.5 127.7V154.6M286.5 129.7V152.8M287.5 131.6V152.5M288.5 132.7V152.8M289.5 134.3V150.5M290.5 135.3V150.2M291.5 136.0V149.7M292.5 135.1V149.8M293.5 133.9V149.8M294.5 135.5V149.1M295.5 132.2V152.0M296.5 126.1V159.0M297.5 129.2V154.7M298.5 131.3V152.1M299.5 132.0V150.4M300.5 135.9V149.8M301.5 138.1V149.4M302.5 138.3V148.8M303.5 137.6V149.4M304.5 138.2V149.2M305.5 137.9V150.1M306.5 135.4V151.1M307.5 133.3V151.8M308.5 132.0V155.0M309.5 130.1V158.6M310.5 133.4V155.9M311.5 133.2V153.8M312.5 134.2V150.5M313.5 134.2V149.9M314.5 136.0V149.5M315.5 135.5V148.9M316.5 136.2V148.6M317.5 135.6V148.7M318.5 135.7V148.4M319.5 134.7V148.7M320.5 133.9V149.3M321.5 131.9V152.0M322.5 125.7V157.1M323.5 110.6V167.7M324.5 98.2V174.3M325.5 106.1V170.7M326.5 109.2V173.7M327.5 112.3V171.3M328.5 106.6V171.1M329.5 113.3V161.5M330.5 127.3V152.3M331.5 131.6V151.3M332.5 125.6V152.9M333.5 122.2V161.8M334.5 112.3V173.3M335.5 104.6V172.9M336.5 111.5V171.2M337.5 115.4V178.3M338.5 110.6V170.0M339.5 112.0V172.8M340.5 109.6V167.6M341.5 110.5V166.7M342.5 109.9V166.2M343.5 113.4V167.3M344.5 114.9V165.3M345.5 117.0V165.3M346.5 117.0V164.8M347.5 111.7V165.3M348.5 111.1V167.3M349.5 112.9V165.2M350.5 111.5V161.8M351.5 124.4V162.6M352.5 126.1V161.5M353.5 124.4V165.9M354.5 117.4V168.2M355.5 119.7V168.9M356.5 116.9V172.0M357.5 112.6V169.6M358.5 113.9V169.9M359.5 111.3V171.9M360.5 111.4V172.6M361.5 108.2V175.3M362.5 107.1V171.6M363.5 110.2V182.0M364.5 112.7V173.7M365.5 112.9V178.9M366.5 107.4V177.6M367.5 109.0V176.1M368.5 126.1V162.6M369.5 130.4V156.2M370.5 120.2V171.7M371.5 113.8V171.7M372.5 116.5V169.7M373.5 111.2V170.4M374.5 114.7V168.0M375.5 107.7V170.7M376.5 110.6V174.0M377.5 110.5V170.5M378.5 109.1V166.1M379.5 106.9V171.1M380.5 111.9V169.0M381.5 114.5V170.9M382.5 111.8V171.8M383.5 114.0V170.5M384.5 103.6V171.3M385.5 110.7V172.7M386.5 109.8V186.3M387.5 112.4V188.7M388.5 105.9V173.2M389.5 111.7V175.4M390.5 117.3V173.3M391.5 106.8V171.1M392.5 108.0V168.9M393.5 118.5V171.3M394.5 115.0V167.9M395.5 119.1V163.3M396.5 119.2V162.2M397.5 118.7V159.9M398.5 124.2V161.5M399.5 123.8V157.6M400.5 126.8V158.4M401.5 126.6V156.3M402.5 128.3V155.0M403.5 130.3V154.0M404.5 131.9V155.2M405.5 133.9V151.5M406.5 137.1V150.5M407.5 138.4V148.7M408.5 140.1V147.3M409.5 138.3V148.6M410.5 134.6V151.6M411.5 128.1V152.7M412.5 128.7V154.4M413.5 130.7V153.8M414.5 130.6V154.3M415.5 132.4V153.5M416.5 129.9V154.0M417.5 133.0V152.8M418.5 134.4V154.9M419.5 134.5V152.3M420.5 135.5V150.9M421.5 136.5V153.5M422.5 136.1V154.3M423.5 135.6V153.3M424.5 134.9V153.4M425.5 133.8V152.7M426.5 133.0V154.5M427.5 132.7V154.8M428.5 132.5V153.4M429.5 135.5V154.0M430.5 135.8V152.7M431.5 134.6V152.1M432.5 129.9V156.1M433.5 116.6V164.0M434.5 107.0V170.3M435.5 104.6V171.8M436.5 104.9V173.9M437.5 108.3V174.2M438.5 114.6V168.8M439.5 117.9V167.5M440.5 120.5V161.5M441.5 129.3V158.4M442.5 132.6V153.7M443.5 124.5V159.0M444.5 121.8V163.1M445.5 119.6V161.2M446.5 119.0V162.3M447.5 119.8V161.7M448.5 119.4V162.8M449.5 116.5V164.5M450.5 117.0V163.1M451.5 113.1V163.8M452.5 110.8V165.6M453.5 117.0V164.8M454.5 111.9V164.6M455.5 120.9V164.8M456.5 120.1V163.9M457.5 122.6V164.6M458.5 118.8V164.6M459.5 118.2V163.6M460.5 114.7V170.0M461.5 111.8V167.5M462.5 110.4V166.9M463.5 113.9V167.2M464.5 115.9V165.8M465.5 117.5V167.7M466.5 118.0V165.6M467.5 118.6V165.4M468.5 119.7V163.3M469.5 116.9V164.3M470.5 109.0V165.9M471.5 115.5V164.1M472.5 117.9V162.7M473.5 107.6V162.1M474.5 113.8V162.0M475.5 107.4V160.8M476.5 113.2V163.6M477.5 116.6V161.9M478.5 114.5V163.5M479.5 116.1V162.7M480.5 113.2V164.3M481.5 113.2V163.9M482.5 111.0V164.5M483.5 113.2V166.9M484.5 109.9V174.9M485.5 108.3V169.6M486.5 106.3V169.2M487.5 105.3V179.1M488.5 108.6V171.5M489.5 108.3V165.8M490.5 110.0V169.3M491.5 109.0V168.4M492.5 109.7V167.0M493.5 117.1V164.1M494.5 116.8V166.3M495.5 119.5V164.3M496.5 119.0V166.0M497.5 116.9V164.7M498.5 108.7V174.2M499.5 109.5V172.5M500.5 107.9V175.8M501.5 112.7V168.9M502.5 116.0V166.4M503.5 112.0V167.3M504.5 117.7V166.1M505.5 116.0V166.7M506.5 115.8V167.4M507.5 108.9V170.0M508.5 115.8V165.1M509.5 106.3V168.2M510.5 112.7V167.5M511.5 108.7V171.8M512.5 99.9V170.3M513.5 110.2V170.1M514.5 116.1V164.6M515.5 104.9V166.0M516.5 116.1V167.0M517.5 110.2V167.2M518.5 114.2V171.6M519.5 113.0V166.8M520.5 110.4V164.7M521.5 114.4V165.0M522.5 115.8V163.5M523.5 119.5V162.1M524.5 122.1V160.3M525.5 116.3V159.3M526.5 123.3V158.8M527.5 124.0V160.5M528.5 122.4V162.5M529.5 121.7V171.4M530.5 121.2V165.7M531.5 128.3V154.1M532.5 137.1V150.8M533.5 137.0V149.8M534.5 136.5V149.7M535.5 133.1V150.6M536.5 124.3V156.2M537.5 104.1V165.7M538.5 105.8V168.4M539.5 107.5V167.3M540.5 110.0V169.2M541.5 120.0V160.7M542.5 125.7V159.5M543.5 131.3V154.0M544.5 127.1V157.1M545.5 118.3V163.8M546.5 115.1V172.9M547.5 112.6V170.2M548.5 116.6V175.2M549.5 112.0V176.3M550.5 117.7V169.4M551.5 109.8V169.1M552.5 119.1V170.0M553.5 118.2V169.2M554.5 116.8V166.4M555.5 115.4V169.6M556.5 122.2V174.6M557.5 124.0V164.8M558.5 122.7V165.6M559.5 121.6V164.1M560.5 120.5V169.3M561.5 113.8V169.7M562.5 102.3V171.1M563.5 111.2V168.1M564.5 111.1V167.6M565.5 108.7V167.7M566.5 107.7V167.1M567.5 107.5V171.5M568.5 112.2V163.3M569.5 113.4V165.8M570.5 114.6V164.1M571.5 118.3V161.6M572.5 117.7V165.0M573.5 115.4V164.7M574.5 119.1V160.5M575.5 118.9V166.6M576.5 120.4V166.0M577.5 123.4V165.3M578.5 124.8V160.9M579.5 124.5V160.7M580.5 127.1V160.5M581.5 125.6V159.3M582.5 126.1V159.3M583.5 128.3V163.3M584.5 129.4V161.7M585.5 138.7V148.4M586.5 140.6V147.6M587.5 134.7V151.5M588.5 132.5V153.3M589.5 130.6V155.1M590.5 130.9V155.8M591.5 132.0V154.7M592.5 133.1V154.1M593.5 132.7V155.4M594.5 132.4V158.6M595.5 131.5V156.2M596.5 133.7V156.3M597.5 130.9V156.4M598.5 131.4V157.4M599.5 132.6V158.5M600.5 130.4V159.6M601.5 129.8V156.3M602.5 132.1V156.1M603.5 134.4V154.6M604.5 133.9V153.5M605.5 134.3V153.6M606.5 134.8V153.0M607.5 135.8V153.5M608.5 135.9V152.9M609.5 135.3V154.2M610.5 136.0V152.5M611.5 136.1V152.1M612.5 132.3V156.3M613.5 122.2V158.7M614.5 125.7V158.9M615.5 127.7V158.3M616.5 130.2V157.4M617.5 131.2V156.5M618.5 130.6V157.0M619.5 132.2V156.8M620.5 131.9V155.6M621.5 133.6V154.3M622.5 132.3V154.7M623.5 131.5V154.5M624.5 133.0V154.7M625.5 132.1V153.9M626.5 134.0V152.8M627.5 130.4V153.3M628.5 133.5V152.3M629.5 133.4V152.0M630.5 134.2V152.2M631.5 134.8V152.7M632.5 135.1V152.4M633.5 135.3V152.2M634.5 130.1V152.3M635.5 129.3V153.7M636.5 123.7V157.6M637.5 111.8V168.7M638.5 109.5V171.1M639.5 111.2V170.2M640.5 112.4V171.6M641.5 113.5V172.7M642.5 112.4V177.3M643.5 112.6V186.5M644.5 107.9V175.2M645.5 113.5V176.3M646.5 110.6V173.9M647.5 111.0V171.7M648.5 108.4V172.1M649.5 108.3V171.8M650.5 105.3V171.7M651.5 113.0V170.0M652.5 113.9V167.1M653.5 115.5V163.2M654.5 118.1V162.6M655.5 123.6V159.5M656.5 127.7V155.7M657.5 124.2V155.9M658.5 123.0V163.7M659.5 114.3V167.9M660.5 112.6V169.3M661.5 113.7V170.1M662.5 109.3V175.7M663.5 107.9V174.0M664.5 114.5V184.1M665.5 111.6V172.5M666.5 110.7V169.6M667.5 113.7V169.5M668.5 115.8V167.5M669.5 114.8V175.7M670.5 117.3V167.3M671.5 114.5V165.8M672.5 118.9V168.0M673.5 116.6V166.1M674.5 122.4V169.9M675.5 114.4V169.7M676.5 108.6V168.4M677.5 99.6V166.8M678.5 102.8V170.6M679.5 98.2V167.6M680.5 112.8V170.1M681.5 108.2V168.6M682.5 110.0V167.2M683.5 117.2V166.4M684.5 114.1V168.2M685.5 116.3V165.5M686.5 117.0V165.1M687.5 118.0V162.5M688.5 119.0V164.5M689.5 113.7V171.8M690.5 111.2V173.2M691.5 105.7V179.1M692.5 99.5V179.7M693.5 110.2V176.1M694.5 107.5V170.3M695.5 102.6V170.9M696.5 106.9V170.0M697.5 107.0V170.9M698.5 109.1V168.3M699.5 119.8V172.6M700.5 117.1V167.1M701.5 119.2V168.8M702.5 119.7V169.0M703.5 122.3V173.2M704.5 121.8V172.8M705.5 119.7V168.3M706.5 119.8V166.3M707.5 113.5V169.2M708.5 117.1V169.8M709.5 113.4V167.0M710.5 116.6V166.7M711.5 117.5V167.9M712.5 114.1V171.8M713.5 118.5V166.7M714.5 115.7V167.2M715.5 116.0V166.5M716.5 114.5V162.6M717.5 114.5V165.2M718.5 117.2V161.8M719.5 117.7V162.4M720.5 121.0V162.2M721.5 118.5V160.9M722.5 118.4V164.5M723.5 119.0V161.2M724.5 119.8V162.5M725.5 120.2V168.1M726.5 125.3V162.1M727.5 124.3V162.2M728.5 123.5V166.9M729.5 125.1V160.5M730.5 124.6V162.4M731.5 127.2V161.6M732.5 126.5V157.9M733.5 128.0V157.6M734.5 127.0V158.3M735.5 128.0V156.5M736.5 124.3V157.9M737.5 128.3V156.1M738.5 128.5V157.1M739.5 127.7V156.2M740.5 131.1V156.6M741.5 130.2V156.0M742.5 132.9V152.4M743.5 134.9V151.5M744.5 135.7V150.5M745.5 136.8V149.8M746.5 137.8V149.8M747.5 138.6V149.0M748.5 139.9V148.0M749.5 141.0V147.7M750.5 141.6V147.3M751.5 141.8V147.1M752.5 141.9V147.0M753.5 142.1V147.1M754.5 142.1V146.8M755.5 142.2V146.9M756.5 142.2V146.9M757.5 142.3V147.0M758.5 142.3V146.7M759.5 142.3V146.9M760.5 142.4V146.7M761.5 142.4V146.7M762.5 142.4V146.6M763.5 142.4V146.7M764.5 142.4V146.4M765.5 142.5V146.6M766.5 142.6V146.5M767.5 142.5V146.3M768.5 142.6V146.3M769.5 142.6V146.4M770.5 142.7V146.4M771.5 142.7V146.2M772.5 142.7V146.2" stroke="#3232c8"/><path d="M104.5 137.0V150.6M105.5 136.8V150.8M106.5 136.7V150.9M107.5 137.4V150.2M108.5 137.7V149.9M109.5 138.3V149.3M110.5 139.2V148.4M111.5 139.1V148.5M112.5 139.6V148.0M113.5 140.1V147.5M114.5 139.8V147.8M115.5 140.1V147.5M116.5 140.3V147.3M117.5 139.9V147.7M118.5 140.2V147.4M119.5 140.2V147.4M120.5 140.5V147.1M121.5 140.2V147.4M122.5 140.5V147.1M123.5 140.4V147.2M124.5 140.3V147.3M125.5 140.4V147.2M126.5 139.9V147.7M127.5 139.3V148.3M128.5 137.1V150.5M129.5 134.9V152.7M130.5 133.6V154.0M131.5 131.2V156.4M132.5 130.7V156.9M133.5 130.7V156.9M134.5 131.3V156.3M135.5 130.6V157.0M136.5 130.7V156.9M137.5 131.9V155.7M138.5 131.1V156.5M139.5 132.0V155.6M140.5 131.4V156.2M141.5 131.8V155.8M142.5 132.0V155.6M143.5 133.5V154.1M144.5 134.2V153.4M145.5 135.1V152.5M146.5 134.8V152.8M147.5 134.6V153.0M148.5 135.0V152.6M149.5 133.3V154.3M150.5 133.1V154.5M151.5 132.7V154.9M152.5 132.7V154.9M153.5 133.8V153.8M154.5 131.8V155.8M155.5 131.4V156.2M156.5 131.6V156.0M157.5 131.2V156.4M158.5 130.6V157.0M159.5 130.4V157.2M160.5 131.2V156.4M161.5 132.3V155.3M162.5 132.6V155.0M163.5 132.5V155.1M164.5 131.3V156.3M165.5 132.2V155.4M166.5 131.5V156.1M167.5 132.0V155.6M168.5 131.4V156.2M169.5 132.1V155.5M170.5 132.6V155.0M171.5 131.6V156.0M172.5 132.4V155.2M173.5 132.3V155.3M174.5 132.2V155.4M175.5 131.9V155.7M176.5 133.3V154.3M177.5 132.6V155.0M178.5 132.7V154.9M179.5 131.8V155.8M180.5 130.8V156.8M181.5 130.5V157.1M182.5 131.6V156.0M183.5 131.0V156.6M184.5 129.7V157.9M185.5 129.9V157.7M186.5 130.6V157.0M187.5 130.7V156.9M188.5 131.8V155.8M189.5 131.2V156.4M190.5 132.6V155.0M191.5 132.5V155.1M192.5 133.3V154.3M193.5 134.5V153.1M194.5 134.4V153.2M195.5 134.8V152.8M196.5 134.4V153.2M197.5 135.6V152.0M198.5 137.4V150.2M199.5 138.6V149.0M200.5 139.9V147.7M201.5 141.2V146.4M202.5 142.1V145.5M203.5 142.5V145.1M204.5 142.2V145.4M205.5 141.5V146.1M206.5 140.4V147.2M207.5 139.5V148.1M208.5 138.8V148.8M209.5 137.9V149.7M210.5 137.2V150.4M211.5 138.2V149.4M212.5 138.2V149.4M213.5 138.1V149.5M214.5 138.9V148.7M215.5 139.2V148.4M216.5 139.3V148.3M217.5 139.5V148.1M218.5 139.4V148.2M219.5 139.5V148.1M220.5 139.3V148.3M221.5 139.3V148.3M222.5 139.8V147.8M223.5 139.0V148.6M224.5 137.6V150.0M225.5 135.5V152.1M226.5 133.3V154.3M227.5 131.2V156.4M228.5 129.1V158.5M229.5 128.6V159.0M230.5 128.3V159.3M231.5 127.2V160.4M232.5 127.4V160.2M233.5 128.0V159.6M234.5 129.5V158.1M235.5 131.3V156.3M236.5 131.6V156.0M237.5 133.1V154.5M238.5 134.5V153.1M239.5 134.7V152.9M240.5 134.9V152.7M241.5 134.3V153.3M242.5 133.6V154.0M243.5 133.4V154.2M244.5 132.7V154.9M245.5 132.5V155.1M246.5 131.3V156.3M247.5 131.9V155.7M248.5 132.1V155.5M249.5 132.6V155.0M250.5 133.1V154.5M251.5 133.7V153.9M252.5 134.9V152.7M253.5 135.7V151.9M254.5 134.9V152.7M255.5 135.1V152.5M256.5 134.6V153.0M257.5 134.3V153.3M258.5 133.3V154.3M259.5 133.2V154.4M260.5 133.3V154.3M261.5 133.1V154.5M262.5 133.4V154.2M263.5 133.2V154.4M264.5 133.8V153.8M265.5 133.7V153.9M266.5 134.7V152.9M267.5 134.2V153.4M268.5 134.9V152.7M269.5 135.6V152.0M270.5 135.6V152.0M271.5 135.2V152.4M272.5 134.9V152.7M273.5 135.8V151.8M274.5 135.6V152.0M275.5 136.4V151.2M276.5 136.5V151.1M277.5 137.8V149.8M278.5 137.8V149.8M279.5 137.9V149.7M280.5 138.4V149.2M281.5 138.1V149.5M282.5 138.0V149.6M283.5 137.8V149.8M284.5 137.8V149.8M285.5 137.7V149.9M286.5 138.8V148.8M287.5 139.3V148.3M288.5 139.9V147.7M289.5 140.0V147.6M290.5 140.2V147.4M291.5 140.4V147.2M292.5 140.7V146.9M293.5 140.2V147.4M294.5 139.4V148.2M295.5 139.1V148.5M296.5 139.1V148.5M297.5 138.5V149.1M298.5 138.7V148.9M299.5 139.9V147.7M300.5 140.7V146.9M301.5 141.2V146.4M302.5 141.3V146.3M303.5 141.3V146.3M304.5 141.1V146.5M305.5 140.6V147.0M306.5 140.3V147.3M307.5 139.4V148.2M308.5 138.7V148.9M309.5 138.7V148.9M310.5 139.0V148.6M311.5 139.2V148.4M312.5 140.1V147.5M313.5 140.7V146.9M314.5 140.8V146.8M315.5 141.1V146.5M316.5 141.0V146.6M317.5 141.1V146.5M318.5 141.0V146.6M319.5 140.6V147.0M320.5 139.8V147.8M321.5 137.7V149.9M322.5 135.9V151.7M323.5 132.2V155.4M324.5 130.7V156.9M325.5 128.6V159.0M326.5 130.3V157.3M327.5 130.0V157.6M328.5 131.9V155.7M329.5 134.5V153.1M330.5 136.4V151.2M331.5 137.2V150.4M332.5 136.7V150.9M333.5 134.0V153.6M334.5 133.2V154.4M335.5 130.5V157.1M336.5 130.4V157.2M337.5 130.4V157.2M338.5 130.9V156.7M339.5 131.2V156.4M340.5 131.3V156.3M341.5 131.6V156.0M342.5 132.2V155.4M343.5 131.7V155.9M344.5 132.5V155.1M345.5 131.7V155.9M346.5 131.6V156.0M347.5 131.6V156.0M348.5 132.6V155.0M349.5 132.4V155.2M350.5 133.1V154.5M351.5 134.4V153.2M352.5 134.8V152.8M353.5 134.3V153.3M354.5 133.1V154.5M355.5 133.4V154.2M356.5 132.9V154.7M357.5 131.4V156.2M358.5 130.4V157.2M359.5 129.6V158.0M360.5 129.9V157.7M361.5 128.3V159.3M362.5 129.6V158.0M363.5 128.4V159.2M364.5 129.7V157.9M365.5 130.1V157.5M366.5 131.1V156.5M367.5 133.1V154.5M368.5 133.1V154.5M369.5 133.5V154.1M370.5 134.2V153.4M371.5 132.0V155.6M372.5 131.4V156.2M373.5 131.4V156.2M374.5 131.2V156.4M375.5 130.1V157.5M376.5 129.8V157.8M377.5 131.4V156.2M378.5 131.8V155.8M379.5 130.7V156.9M380.5 131.8V155.8M381.5 130.5V157.1M382.5 131.2V156.4M383.5 130.6V157.0M384.5 130.6V157.0M385.5 129.2V158.4M386.5 129.6V158.0M387.5 129.8V157.8M388.5 128.8V158.8M389.5 130.8V156.8M390.5 130.2V157.4M391.5 131.9V155.7M392.5 131.4V156.2M393.5 132.3V155.3M394.5 132.2V155.4M395.5 134.0V153.6M396.5 133.9V153.7M397.5 134.7V152.9M398.5 134.8V152.8M399.5 135.4V152.2M400.5 136.4V151.2M401.5 137.5V150.1M402.5 138.1V149.5M403.5 138.8V148.8M404.5 139.4V148.2M405.5 140.3V147.3M406.5 141.0V146.6M407.5 141.3V146.3M408.5 141.3V146.3M409.5 141.1V146.5M410.5 140.1V147.5M411.5 139.8V147.8M412.5 139.0V148.6M413.5 139.0V148.6M414.5 138.5V149.1M415.5 138.6V149.0M416.5 139.2V148.4M417.5 139.2V148.4M418.5 139.4V148.2M419.5 139.9V147.7M420.5 140.1V147.5M421.5 140.1V147.5M422.5 139.9V147.7M423.5 140.2V147.4M424.5 139.7V147.9M425.5 139.5V148.1M426.5 139.3V148.3M427.5 139.2V148.4M428.5 139.1V148.5M429.5 139.7V147.9M430.5 139.0V148.6M431.5 138.3V149.3M432.5 135.9V151.7M433.5 133.5V154.1M434.5 132.3V155.3M435.5 129.6V158.0M436.5 128.9V158.7M437.5 130.8V156.8M438.5 132.5V155.1M439.5 133.9V153.7M440.5 134.6V153.0M441.5 136.6V151.0M442.5 136.0V151.6M443.5 136.7V150.9M444.5 135.5V152.1M445.5 135.3V152.3M446.5 134.8V152.8M447.5 133.8V153.8M448.5 134.4V153.2M449.5 133.7V153.9M450.5 132.4V155.2M451.5 132.5V155.1M452.5 132.2V155.4M453.5 132.2V155.4M454.5 134.0V153.6M455.5 134.2V153.4M456.5 133.7V153.9M457.5 133.8V153.8M458.5 134.5V153.1M459.5 133.3V154.3M460.5 133.2V154.4M461.5 132.5V155.1M462.5 132.8V154.8M463.5 132.9V154.7M464.5 131.7V155.9M465.5 133.1V154.5M466.5 132.5V155.1M467.5 133.7V153.9M468.5 133.2V154.4M469.5 133.7V153.9M470.5 133.2V154.4M471.5 133.6V154.0M472.5 132.9V154.7M473.5 133.8V153.8M474.5 132.9V154.7M475.5 133.3V154.3M476.5 133.9V153.7M477.5 133.6V154.0M478.5 133.3V154.3M479.5 132.5V155.1M480.5 133.2V154.4M481.5 133.1V154.5M482.5 131.4V156.2M483.5 131.0V156.6M484.5 130.5V157.1M485.5 130.7V156.9M486.5 130.5V157.1M487.5 130.2V157.4M488.5 130.7V156.9M489.5 131.0V156.6M490.5 130.7V156.9M491.5 131.3V156.3M492.5 131.6V156.0M493.5 132.5V155.1M494.5 133.6V154.0M495.5 133.1V154.5M496.5 133.0V154.6M497.5 132.4V155.2M498.5 131.3V156.3M499.5 130.3V157.3M500.5 129.2V158.4M501.5 129.5V158.1M502.5 130.5V157.1M503.5 131.9V155.7M504.5 132.5V155.1M505.5 132.5V155.1M506.5 131.6V156.0M507.5 132.4V155.2M508.5 132.1V155.5M509.5 131.6V156.0M510.5 131.7V155.9M511.5 130.0V157.6M512.5 131.8V155.8M513.5 130.9V156.7M514.5 130.7V156.9M515.5 132.1V155.5M516.5 131.5V156.1M517.5 131.8V155.8M518.5 132.0V155.6M519.5 132.3V155.3M520.5 132.8V154.8M521.5 132.3V155.3M522.5 133.2V154.4M523.5 133.7V153.9M524.5 135.5V152.1M525.5 135.1V152.5M526.5 135.7V151.9M527.5 134.9V152.7M528.5 134.7V152.9M529.5 135.6V152.0M530.5 135.8V151.8M531.5 137.9V149.7M532.5 138.9V148.7M533.5 140.1V147.5M534.5 139.8V147.8M535.5 137.6V150.0M536.5 134.9V152.7M537.5 133.7V153.9M538.5 131.3V156.3M539.5 130.6V157.0M540.5 132.7V154.9M541.5 134.0V153.6M542.5 135.8V151.8M543.5 136.3V151.3M544.5 135.6V152.0M545.5 134.4V153.2M546.5 133.3V154.3M547.5 131.7V155.9M548.5 131.3V156.3M549.5 132.0V155.6M550.5 131.5V156.1M551.5 132.3V155.3M552.5 131.4V156.2M553.5 132.4V155.2M554.5 132.3V155.3M555.5 133.0V154.6M556.5 133.4V154.2M557.5 134.1V153.5M558.5 134.3V153.3M559.5 132.9V154.7M560.5 132.9V154.7M561.5 132.1V155.5M562.5 131.3V156.3M563.5 130.2V157.4M564.5 131.1V156.5M565.5 131.3V156.3M566.5 130.4V157.2M567.5 131.5V156.1M568.5 131.6V156.0M569.5 131.7V155.9M570.5 132.0V155.6M571.5 132.4V155.2M572.5 134.0V153.6M573.5 133.9V153.7M574.5 133.6V154.0M575.5 134.1V153.5M576.5 135.4V152.2M577.5 135.8V151.8M578.5 136.1V151.5M579.5 136.5V151.1M580.5 136.5V151.1M581.5 136.2V151.4M582.5 136.8V150.8M583.5 137.9V149.7M584.5 139.3V148.3M585.5 139.9V147.7M586.5 140.6V147.0M587.5 140.4V147.2M588.5 139.8V147.8M589.5 139.0V148.6M590.5 138.4V149.2M591.5 138.3V149.3M592.5 138.8V148.8M593.5 138.5V149.1M594.5 138.8V148.8M595.5 138.6V149.0M596.5 138.7V148.9M597.5 138.5V149.1M598.5 138.3V149.3M599.5 138.1V149.5M600.5 138.4V149.2M601.5 138.5V149.1M602.5 138.5V149.1M603.5 139.2V148.4M604.5 139.5V148.1M605.5 139.3V148.3M606.5 139.7V147.9M607.5 139.8V147.8M608.5 140.0V147.6M609.5 139.8V147.8M610.5 140.1V147.5M611.5 139.0V148.6M612.5 138.1V149.5M613.5 138.1V149.5M614.5 137.4V150.2M615.5 136.9V150.7M616.5 137.5V150.1M617.5 138.2V149.4M618.5 138.7V148.9M619.5 138.6V149.0M620.5 138.7V148.9M621.5 138.6V149.0M622.5 139.0V148.6M623.5 139.0V148.6M624.5 138.9V148.7M625.5 138.9V148.7M626.5 139.3V148.3M627.5 139.4V148.2M628.5 139.4V148.2M629.5 139.3V148.3M630.5 139.9V147.7M631.5 139.6V148.0M632.5 139.7V147.9M633.5 139.6V148.0M634.5 138.6V149.0M635.5 137.3V150.3M636.5 135.7V151.9M637.5 132.9V154.7M638.5 131.9V155.7M639.5 130.7V156.9M640.5 130.4V157.2M641.5 129.2V158.4M642.5 129.2V158.4M643.5 130.4V157.2M644.5 129.0V158.6M645.5 129.3V158.3M646.5 129.6V158.0M647.5 129.0V158.6M648.5 129.8V157.8M649.5 129.9V157.7M650.5 129.5V158.1M651.5 131.0V156.6M652.5 131.8V155.8M653.5 133.0V154.6M654.5 134.0V153.6M655.5 135.3V152.3M656.5 135.5V152.1M657.5 135.6V152.0M658.5 135.1V152.5M659.5 132.9V154.7M660.5 131.6V156.0M661.5 130.2V157.4M662.5 129.6V158.0M663.5 130.7V156.9M664.5 130.5V157.1M665.5 131.0V156.6M666.5 130.1V157.5M667.5 131.9V155.7M668.5 132.2V155.4M669.5 131.3V156.3M670.5 131.9V155.7M671.5 133.0V154.6M672.5 132.2V155.4M673.5 132.2V155.4M674.5 132.4V155.2M675.5 132.5V155.1M676.5 130.9V156.7M677.5 130.8V156.8M678.5 130.1V157.5M679.5 129.3V158.3M680.5 129.9V157.7M681.5 130.2V157.4M682.5 132.0V155.6M683.5 132.2V155.4M684.5 132.4V155.2M685.5 133.8V153.8M686.5 132.6V155.0M687.5 133.4V154.2M688.5 132.5V155.1M689.5 131.2V156.4M690.5 130.2V157.4M691.5 128.1V159.5M692.5 128.2V159.4M693.5 128.4V159.2M694.5 129.1V158.5M695.5 130.2V157.4M696.5 130.1V157.5M697.5 129.7V157.9M698.5 130.7V156.9M699.5 131.3V156.3M700.5 132.9V154.7M701.5 133.5V154.1M702.5 133.9V153.7M703.5 133.3V154.3M704.5 133.4V154.2M705.5 133.0V154.6M706.5 132.6V155.0M707.5 132.2V155.4M708.5 132.3V155.3M709.5 131.5V156.1M710.5 132.6V155.0M711.5 131.7V155.9M712.5 132.5V155.1M713.5 133.4V154.2M714.5 133.1V154.5M715.5 132.9V154.7M716.5 133.2V154.4M717.5 133.1V154.5M718.5 133.6V154.0M719.5 133.9V153.7M720.5 133.4V154.2M721.5 134.4V153.2M722.5 134.0V153.6M723.5 134.1V153.5M724.5 134.6V153.0M725.5 134.9V152.7M726.5 134.5V153.1M727.5 135.4V152.2M728.5 135.1V152.5M729.5 136.3V151.3M730.5 136.2V151.4M731.5 136.2V151.4M732.5 137.0V150.6M733.5 136.4V151.2M734.5 137.4V150.2M735.5 137.0V150.6M736.5 137.6V150.0M737.5 137.1V150.5M738.5 137.6V150.0M739.5 137.7V149.9M740.5 138.4V149.2M741.5 138.7V148.9M742.5 139.3V148.3M743.5 140.1V147.5M744.5 140.6V147.0M745.5 140.8V146.8M746.5 141.5V146.1M747.5 141.7V145.9M748.5 142.2V145.4M749.5 142.5V145.1M750.5 142.7V144.9M751.5 142.7V144.9M752.5 142.8V144.8M753.5 142.9V144.7M754.5 142.9V144.7M755.5 143.0V144.6M756.5 143.0V144.6M757.5 143.0V144.6M758.5 143.1V144.5M759.5 143.1V144.5M760.5 143.1V144.5M761.5 143.1V144.5M762.5 143.1V144.5M763.5 143.1V144.5M764.5 143.2V144.4M765.5 143.1V144.5M766.5 143.2V144.4M767.5 143.2V144.4M768.5 143.2V144.4M769.5 143.2V144.4M770.5 143.2V144.4M771.5 143.2V144.4M772.5 143.3V144.3" stroke="#6464dc"/><path d="M104.5 215.6V264.1M105.5 217.6V268.2M106.5 219.9V268.0M107.5 222.0V261.5M108.5 225.1V259.4M109.5 224.9V257.5M110.5 226.8V259.7M111.5 229.0V255.8M112.5 230.2V254.3M113.5 231.1V253.0M114.5 230.7V254.3M115.5 230.2V252.8M116.5 231.1V256.9M117.5 232.4V252.9M118.5 229.9V251.9M119.5 232.0V252.0M120.5 232.5V252.8M121.5 234.6V251.5M122.5 233.4V251.8M123.5 233.3V252.0M124.5 234.2V251.6M125.5 231.3V251.2M126.5 227.9V253.5M127.5 228.6V253.6M128.5 227.8V252.3M129.5 219.0V257.0M130.5 199.4V274.8M131.5 206.3V270.5M132.5 207.0V269.1M133.5 209.4V267.9M134.5 199.0V270.7M135.5 207.8V268.6M136.5 207.9V272.1M137.5 208.8V266.2M138.5 212.2V270.3M139.5 205.6V268.8M140.5 212.2V268.6M141.5 213.6V267.0M142.5 207.2V278.2M143.5 210.8V276.5M144.5 211.1V268.5M145.5 209.7V263.5M146.5 223.9V258.8M147.5 226.8V256.5M148.5 213.5V265.4M149.5 213.4V267.9M150.5 212.6V266.3M151.5 217.5V265.2M152.5 215.6V267.6M153.5 212.1V265.6M154.5 218.1V269.1M155.5 209.3V272.8M156.5 202.7V278.5M157.5 205.4V278.2M158.5 204.7V275.1M159.5 209.7V273.8M160.5 204.6V271.6M161.5 208.6V273.8M162.5 209.2V272.1M163.5 209.9V271.0M164.5 214.3V275.0M165.5 215.9V269.3M166.5 210.0V274.9M167.5 211.0V267.1M168.5 206.9V269.3M169.5 210.4V268.1M170.5 215.4V267.5M171.5 206.3V264.8M172.5 209.7V265.1M173.5 210.5V267.0M174.5 214.8V264.8M175.5 209.4V266.9M176.5 211.4V265.0M177.5 214.4V263.3M178.5 213.5V266.0M179.5 211.4V264.7M180.5 210.8V266.9M181.5 212.3V269.6M182.5 206.0V268.7M183.5 208.2V267.8M184.5 201.0V273.5M185.5 202.0V268.9M186.5 206.3V266.3M187.5 198.5V270.1M188.5 204.1V266.3M189.5 208.4V266.5M190.5 209.6V264.8M191.5 213.6V265.8M192.5 215.8V263.4M193.5 215.4V264.7M194.5 220.6V264.2M195.5 218.6V265.9M196.5 215.5V264.5M197.5 216.8V267.2M198.5 221.5V259.9M199.5 224.3V255.5M200.5 232.1V252.2M201.5 234.1V249.5M202.5 236.4V247.7M203.5 237.1V246.5M204.5 238.4V245.6M205.5 239.1V245.2M206.5 231.3V252.2M207.5 217.5V257.6M208.5 219.7V258.4M209.5 222.4V263.6M210.5 222.5V261.5M211.5 217.8V259.9M212.5 224.9V258.6M213.5 227.3V257.8M214.5 229.2V254.6M215.5 226.9V258.2M216.5 229.4V256.0M217.5 229.4V254.6M218.5 229.4V254.0M219.5 231.9V255.0M220.5 231.2V257.7M221.5 233.0V254.6M222.5 232.5V254.5M223.5 230.1V252.8M224.5 231.8V254.2M225.5 226.8V254.5M226.5 217.7V261.7M227.5 205.3V267.4M228.5 206.3V272.4M229.5 195.8V272.1M230.5 200.3V272.9M231.5 204.2V276.2M232.5 202.8V279.4M233.5 204.2V275.8M234.5 199.8V269.0M235.5 211.6V271.1M236.5 211.0V266.5M237.5 214.8V267.5M238.5 218.0V268.5M239.5 227.9V257.6M240.5 224.3V261.2M241.5 207.2V264.8M242.5 213.1V265.4M243.5 214.0V262.8M244.5 209.4V269.3M245.5 216.7V265.5M246.5 205.5V264.8M247.5 215.5V270.2M248.5 211.2V267.9M249.5 212.2V266.7M250.5 213.8V266.8M251.5 213.4V268.0M252.5 223.1V265.9M253.5 223.7V262.7M254.5 223.8V260.5M255.5 218.4V256.2M256.5 207.3V253.2M257.5 203.6V254.0M258.5 207.4V255.0M259.5 202.2V264.4M260.5 208.3V272.6M261.5 214.6V266.7M262.5 215.0V266.1M263.5 218.9V265.6M264.5 215.6V265.3M265.5 214.8V263.6M266.5 218.1V263.1M267.5 218.0V261.1M268.5 219.5V261.5M269.5 216.6V260.1M270.5 213.0V256.4M271.5 216.3V256.2M272.5 214.8V255.8M273.5 215.7V257.4M274.5 219.0V257.2M275.5 219.8V257.4M276.5 223.2V257.1M277.5 223.0V257.8M278.5 223.2V258.7M279.5 224.2V256.8M280.5 221.6V256.9M281.5 221.5V256.2M282.5 216.1V256.1M283.5 217.3V258.1M284.5 219.8V258.9M285.5 223.0V255.2M286.5 227.0V255.5M287.5 228.0V254.0M288.5 228.3V253.2M289.5 229.3V252.1M290.5 230.0V252.0M291.5 231.1V251.5M292.5 230.7V250.5M293.5 230.7V251.2M294.5 233.2V251.0M295.5 228.2V256.2M296.5 220.8V261.8M297.5 222.9V258.9M298.5 227.4V255.6M299.5 227.1V251.8M300.5 229.4V252.0M301.5 231.6V251.7M302.5 232.7V252.1M303.5 232.0V251.3M304.5 231.5V250.8M305.5 229.4V251.5M306.5 229.9V252.0M307.5 227.0V253.3M308.5 225.3V254.8M309.5 221.4V260.6M310.5 225.2V255.7M311.5 226.4V254.2M312.5 227.9V252.1M313.5 229.3V250.5M314.5 230.0V249.7M315.5 231.4V248.4M316.5 232.1V248.7M317.5 233.0V247.8M318.5 232.0V248.3M319.5 233.3V248.7M320.5 230.2V249.8M321.5 229.2V254.0M322.5 219.9V259.3M323.5 210.9V264.9M324.5 203.1V271.5M325.5 200.2V272.3M326.5 200.8V271.7M327.5 210.3V269.6M328.5 209.3V268.9M329.5 211.7V267.8M330.5 224.0V255.1M331.5 228.5V253.2M332.5 218.9V255.2M333.5 217.9V263.3M334.5 208.6V271.5M335.5 200.7V275.2M336.5 208.9V271.7M337.5 209.7V270.2M338.5 210.5V270.7M339.5 213.3V267.7M340.5 206.7V270.3M341.5 212.3V265.8M342.5 210.8V264.7M343.5 213.5V267.1M344.5 211.7V265.4M345.5 214.1V264.3M346.5 215.4V268.6M347.5 209.5V272.7M348.5 211.0V267.4M349.5 213.9V265.2M350.5 216.0V269.6M351.5 220.1V264.2M352.5 220.4V263.8M353.5 219.1V271.7M354.5 216.4V268.3M355.5 215.2V268.0M356.5 216.0V269.0M357.5 214.8V271.0M358.5 212.8V271.5M359.5 210.3V280.5M360.5 205.4V275.2M361.5 202.2V280.1M362.5 204.4V274.0M363.5 208.0V278.0M364.5 206.2V285.8M365.5 208.3V273.7M366.5 211.7V273.4M367.5 215.7V269.4M368.5 223.0V263.6M369.5 228.8V257.2M370.5 218.5V268.7M371.5 208.5V267.0M372.5 210.4V267.2M373.5 208.2V268.1M374.5 208.1V268.5M375.5 207.2V265.3M376.5 209.6V264.6M377.5 208.4V268.3M378.5 212.8V268.3M379.5 214.7V271.2M380.5 212.6V269.4M381.5 212.6V265.5M382.5 213.7V267.9M383.5 207.8V267.0M384.5 206.6V268.6M385.5 205.7V281.2M386.5 207.7V275.3M387.5 210.2V281.7M388.5 213.2V275.4M389.5 206.4V271.5M390.5 214.1V274.2M391.5 211.5V269.4M392.5 211.4V267.6M393.5 211.5V269.0M394.5 212.4V268.2M395.5 216.4V262.7M396.5 217.0V263.3M397.5 212.1V260.1M398.5 222.0V261.4M399.5 222.0V258.3M400.5 226.6V256.4M401.5 225.8V257.3M402.5 228.0V255.1M403.5 228.9V253.4M404.5 231.3V253.3M405.5 231.5V250.2M406.5 232.4V250.4M407.5 232.9V248.2M408.5 236.8V246.7M409.5 235.3V248.0M410.5 227.2V251.5M411.5 223.1V258.7M412.5 222.5V257.9M413.5 222.8V257.4M414.5 223.5V255.9M415.5 221.2V256.0M416.5 226.2V255.0M417.5 229.5V255.7M418.5 229.2V255.4M419.5 229.2V254.5M420.5 229.2V253.4M421.5 230.4V252.8M422.5 229.9V253.6M423.5 227.8V256.2M424.5 227.8V254.6M425.5 228.2V255.2M426.5 227.5V255.4M427.5 225.5V258.8M428.5 225.2V257.2M429.5 227.7V258.0M430.5 228.7V254.9M431.5 228.1V253.7M432.5 224.7V260.1M433.5 214.6V265.4M434.5 212.2V272.2M435.5 202.1V283.7M436.5 204.5V273.3M437.5 210.5V273.5M438.5 213.6V267.0M439.5 217.0V267.8M440.5 216.4V263.7M441.5 224.0V259.1M442.5 228.8V256.5M443.5 222.7V261.0M444.5 221.7V260.3M445.5 219.2V268.4M446.5 213.8V264.1M447.5 218.9V268.2M448.5 219.2V265.3M449.5 214.3V265.1M450.5 214.2V263.2M451.5 213.0V264.4M452.5 211.7V263.1M453.5 218.6V265.8M454.5 217.0V261.9M455.5 215.4V262.3M456.5 212.7V264.5M457.5 217.3V265.5M458.5 215.6V263.4M459.5 214.2V266.3M460.5 213.9V266.4M461.5 205.8V270.3M462.5 208.0V268.6M463.5 209.3V268.1M464.5 214.7V271.6M465.5 212.7V270.0M466.5 216.6V269.7M467.5 217.9V269.9M468.5 216.6V264.8M469.5 216.5V267.0M470.5 214.8V265.7M471.5 215.4V264.4M472.5 211.7V262.5M473.5 211.1V265.3M474.5 217.0V262.4M475.5 214.2V263.7M476.5 207.4V266.0M477.5 213.1V261.6M478.5 215.6V264.4M479.5 214.6V264.0M480.5 212.1V265.9M481.5 216.2V264.1M482.5 216.4V268.8M483.5 215.0V267.5M484.5 211.8V269.1M485.5 207.3V273.9M486.5 203.5V278.6M487.5 206.0V278.8M488.5 203.2V272.2M489.5 206.3V267.1M490.5 197.7V267.4M491.5 206.4V267.5M492.5 211.3V264.0M493.5 211.0V267.8M494.5 216.1V265.5M495.5 214.1V262.2M496.5 218.4V265.2M497.5 219.4V266.6M498.5 216.5V268.9M499.5 209.7V272.8M500.5 206.7V276.2M501.5 211.7V272.4M502.5 213.0V266.7M503.5 209.9V265.6M504.5 214.1V264.9M505.5 209.8V267.3M506.5 206.4V266.7M507.5 211.1V268.1M508.5 210.9V268.3M509.5 209.6V269.5M510.5 211.3V269.9M511.5 207.3V271.2M512.5 208.5V269.9M513.5 210.1V272.1M514.5 213.5V271.1M515.5 210.0V267.5M516.5 213.7V267.9M517.5 208.7V266.7M518.5 205.3V267.5M519.5 206.8V268.0M520.5 211.0V266.0M521.5 212.1V266.9M522.5 216.6V263.3M523.5 219.7V261.6M524.5 223.2V261.0M525.5 220.5V261.5M526.5 224.5V261.8M527.5 217.2V260.0M528.5 218.4V262.3M529.5 216.6V265.8M530.5 221.0V271.3M531.5 229.8V255.0M532.5 232.6V251.3M533.5 230.3V250.8M534.5 233.4V250.2M535.5 230.2V250.7M536.5 221.1V255.8M537.5 199.3V267.6M538.5 198.7V268.6M539.5 204.4V268.8M540.5 210.1V269.6M541.5 215.3V263.2M542.5 224.3V258.1M543.5 228.5V255.9M544.5 225.0V259.2M545.5 221.0V262.7M546.5 214.9V268.5M547.5 212.7V270.2M548.5 210.7V265.9M549.5 214.1V265.7M550.5 214.5V267.1M551.5 214.3V268.7M552.5 212.2V267.9M553.5 216.4V266.4M554.5 208.4V266.7M555.5 217.2V265.4M556.5 219.5V264.8M557.5 222.2V266.2M558.5 218.9V266.6M559.5 221.2V268.1M560.5 216.6V264.4M561.5 210.9V269.4M562.5 203.0V269.3M563.5 198.9V278.6M564.5 204.1V275.3M565.5 204.3V270.4M566.5 206.2V269.8M567.5 204.8V267.1M568.5 212.1V266.0M569.5 207.4V266.3M570.5 214.3V263.1M571.5 214.0V265.3M572.5 213.7V263.6M573.5 213.0V262.8M574.5 213.9V266.4M575.5 215.6V263.3M576.5 213.3V265.4M577.5 218.7V261.4M578.5 221.8V259.6M579.5 221.2V260.2M580.5 224.2V260.6M581.5 222.7V261.0M582.5 217.9V265.4M583.5 224.5V262.5M584.5 226.7V259.1M585.5 235.4V249.9M586.5 237.2V247.7M587.5 228.1V254.5M588.5 223.4V259.7M589.5 221.7V261.9M590.5 217.7V263.5M591.5 222.3V259.8M592.5 219.1V261.4M593.5 222.7V261.0M594.5 223.1V265.0M595.5 218.8V261.2M596.5 224.6V259.6M597.5 225.0V259.0M598.5 224.9V258.3M599.5 225.9V259.1M600.5 224.1V262.5M601.5 226.6V261.5M602.5 227.0V260.7M603.5 226.0V259.1M604.5 225.9V258.7M605.5 226.7V257.3M606.5 227.9V257.2M607.5 228.1V257.7M608.5 228.3V257.8M609.5 228.7V257.5M610.5 230.1V256.0M611.5 231.8V255.3M612.5 226.3V255.7M613.5 211.4V260.7M614.5 206.7V262.7M615.5 219.4V263.2M616.5 223.1V261.2M617.5 225.3V261.5M618.5 219.5V260.5M619.5 224.7V259.2M620.5 226.6V257.9M621.5 223.8V258.9M622.5 226.3V258.6M623.5 227.0V258.0M624.5 224.8V256.9M625.5 223.7V258.0M626.5 223.7V259.1M627.5 223.5V258.8M628.5 227.1V257.0M629.5 226.0V256.2M630.5 227.4V255.5M631.5 223.9V256.9M632.5 227.9V256.2M633.5 230.7V255.1M634.5 227.1V255.5M635.5 224.9V253.5M636.5 218.6V256.3M637.5 212.5V265.2M638.5 196.4V272.2M639.5 208.5V273.9M640.5 209.7V274.0M641.5 211.5V270.9M642.5 209.6V275.2M643.5 208.2V279.3M644.5 204.3V274.6M645.5 205.6V272.7M646.5 197.9V273.2M647.5 206.2V268.4M648.5 204.6V275.3M649.5 204.7V273.9M650.5 206.2V269.5M651.5 208.7V272.3M652.5 211.0V265.5M653.5 213.9V271.7M654.5 215.4V263.6M655.5 223.1V261.1M656.5 224.7V258.0M657.5 227.6V258.1M658.5 214.5V265.4M659.5 210.4V267.6M660.5 212.9V268.2M661.5 203.9V273.3M662.5 208.1V273.0M663.5 205.7V276.0M664.5 206.8V278.0M665.5 210.8V274.1M666.5 211.9V277.0M667.5 213.8V267.0M668.5 211.5V268.5M669.5 210.9V269.9M670.5 214.3V269.6M671.5 211.3V266.0M672.5 211.6V268.8M673.5 209.0V266.9M674.5 216.2V269.5M675.5 206.0V267.6M676.5 205.5V272.6M677.5 198.9V269.3M678.5 199.8V271.0M679.5 206.5V271.8M680.5 211.2V271.8M681.5 215.2V267.7M682.5 208.8V270.7M683.5 212.1V270.0M684.5 215.4V267.5M685.5 212.2V271.4M686.5 217.7V266.0M687.5 218.4V262.9M688.5 210.8V266.4M689.5 206.7V268.5M690.5 205.2V280.7M691.5 196.7V278.8M692.5 201.7V276.5M693.5 198.5V278.2M694.5 198.7V275.8M695.5 195.8V276.1M696.5 202.2V274.8M697.5 206.3V269.1M698.5 212.0V268.1M699.5 215.7V271.2M700.5 217.1V270.5M701.5 218.2V269.9M702.5 219.7V270.1M703.5 220.3V267.1M704.5 219.0V266.8M705.5 219.4V265.4M706.5 214.0V273.6M707.5 212.7V269.5M708.5 214.6V274.6M709.5 212.2V265.4M710.5 212.0V266.7M711.5 214.4V263.6M712.5 214.5V265.2M713.5 211.7V265.4M714.5 213.4V268.5M715.5 216.6V263.6M716.5 216.3V263.9M717.5 213.4V263.4M718.5 214.4V261.6M719.5 217.7V262.5M720.5 217.3V263.1M721.5 211.3V262.8M722.5 221.1V263.6M723.5 217.8V265.1M724.5 220.0V261.1M725.5 220.8V263.6M726.5 223.9V262.5M727.5 223.7V262.6M728.5 225.2V262.4M729.5 224.5V258.8M730.5 223.6V261.4M731.5 226.9V258.9M732.5 227.1V258.7M733.5 225.4V256.7M734.5 223.6V256.8M735.5 225.3V257.9M736.5 225.8V256.4M737.5 221.7V258.2M738.5 226.7V258.6M739.5 227.5V253.9M740.5 228.0V253.5M741.5 228.6V252.5M742.5 230.9V251.5M743.5 231.8V249.7M744.5 233.5V249.4M745.5 234.6V249.0M746.5 236.3V248.0M747.5 237.9V246.8M748.5 239.3V245.7M749.5 239.4V245.9M750.5 239.6V245.6M751.5 239.6V245.5M752.5 239.9V245.5M753.5 239.9V245.6M754.5 239.9V245.7M755.5 239.9V245.6M756.5 240.0V245.7M757.5 240.0V245.8M758.5 239.9V245.5M759.5 239.9V245.5M760.5 239.9V245.6M761.5 240.2V245.5M762.5 240.3V245.5M763.5 240.3V245.1M764.5 240.5V245.1M765.5 240.5V244.9M766.5 240.6V244.8M767.5 240.7V244.8M768.5 240.8V244.6M769.5 240.8V244.4M770.5 240.7V244.4M771.5 240.8V244.3M772.5 240.9V244.4" stroke="#3232c8"/><path d="M104.5 231.7V253.1M105.5 232.1V252.7M106.5 232.6V252.2M107.5 233.8V251.0M108.5 234.2V250.6M109.5 234.8V250.0M110.5 235.8V249.0M111.5 236.7V248.1M112.5 236.7V248.1M113.5 237.1V247.7M114.5 237.4V247.4M115.5 237.2V247.6M116.5 237.4V247.4M117.5 237.5V247.3M118.5 237.4V247.4M119.5 238.0V246.8M120.5 238.0V246.8M121.5 238.5V246.3M122.5 238.3V246.5M123.5 238.7V246.1M124.5 238.3V246.5M125.5 237.7V247.1M126.5 237.4V247.4M127.5 236.3V248.5M128.5 234.4V250.4M129.5 232.9V251.9M130.5 231.2V253.6M131.5 229.2V255.6M132.5 229.2V255.6M133.5 229.1V255.7M134.5 228.8V256.0M135.5 229.9V254.9M136.5 229.8V255.0M137.5 228.7V256.1M138.5 228.7V256.1M139.5 230.0V254.8M140.5 230.0V254.8M141.5 230.0V254.8M142.5 230.4V254.4M143.5 229.5V255.3M144.5 230.5V254.3M145.5 232.6V252.2M146.5 232.6V252.2M147.5 232.3V252.5M148.5 233.1V251.7M149.5 231.3V253.5M150.5 230.3V254.5M151.5 231.5V253.3M152.5 230.8V254.0M153.5 230.5V254.3M154.5 230.1V254.7M155.5 228.2V256.6M156.5 228.5V256.3M157.5 227.3V257.5M158.5 227.4V257.4M159.5 227.6V257.2M160.5 227.3V257.5M161.5 228.2V256.6M162.5 228.5V256.3M163.5 228.1V256.7M164.5 229.7V255.1M165.5 229.7V255.1M166.5 229.0V255.8M167.5 230.0V254.8M168.5 228.6V256.2M169.5 229.9V254.9M170.5 230.0V254.8M171.5 230.2V254.6M172.5 229.7V255.1M173.5 229.6V255.2M174.5 230.0V254.8M175.5 230.9V253.9M176.5 230.7V254.1M177.5 230.2V254.6M178.5 231.0V253.8M179.5 229.7V255.1M180.5 229.3V255.5M181.5 229.8V255.0M182.5 228.9V255.9M183.5 228.6V256.2M184.5 227.3V257.5M185.5 228.4V256.4M186.5 227.2V257.6M187.5 229.0V255.8M188.5 227.9V256.9M189.5 229.1V255.7M190.5 229.8V255.0M191.5 231.3V253.5M192.5 231.9V252.9M193.5 231.8V253.0M194.5 231.1V253.7M195.5 231.7V253.1M196.5 231.5V253.3M197.5 233.3V251.5M198.5 234.4V250.4M199.5 235.9V248.9M200.5 237.0V247.8M201.5 238.9V245.9M202.5 239.9V244.9M203.5 240.4V244.4M204.5 240.1V244.7M205.5 239.6V245.2M206.5 237.5V247.3M207.5 236.1V248.7M208.5 234.3V250.5M209.5 233.7V251.1M210.5 233.9V250.9M211.5 234.5V250.3M212.5 234.9V249.9M213.5 235.6V249.2M214.5 236.4V248.4M215.5 236.6V248.2M216.5 236.6V248.2M217.5 237.0V247.8M218.5 237.3V247.5M219.5 236.9V247.9M220.5 237.3V247.5M221.5 237.4V247.4M222.5 237.6V247.2M223.5 237.0V247.8M224.5 236.0V248.8M225.5 234.3V250.5M226.5 232.2V252.6M227.5 230.0V254.8M228.5 228.3V256.5M229.5 227.3V257.5M230.5 226.8V258.0M231.5 226.4V258.4M232.5 226.7V258.1M233.5 227.2V257.6M234.5 228.0V256.8M235.5 228.6V256.2M236.5 229.7V255.1M237.5 232.1V252.7M238.5 233.3V251.5M239.5 233.1V251.7M240.5 233.5V251.3M241.5 232.1V252.7M242.5 231.6V253.2M243.5 231.4V253.4M244.5 231.4V253.4M245.5 230.1V254.7M246.5 229.9V254.9M247.5 230.0V254.8M248.5 230.0V254.8M249.5 230.2V254.6M250.5 231.3V253.5M251.5 232.2V252.6M252.5 232.8V252.0M253.5 232.9V251.9M254.5 233.0V251.8M255.5 232.8V252.0M256.5 232.3V252.5M257.5 232.5V252.3M258.5 231.4V253.4M259.5 229.8V255.0M260.5 230.4V254.4M261.5 230.5V254.3M262.5 231.2V253.6M263.5 230.8V254.0M264.5 231.7V253.1M265.5 231.2V253.6M266.5 232.8V252.0M267.5 231.7V253.1M268.5 233.3V251.5M269.5 233.4V251.4M270.5 233.3V251.5M271.5 233.2V251.6M272.5 234.0V250.8M273.5 233.6V251.2M274.5 233.4V251.4M275.5 234.2V250.6M276.5 234.1V250.7M277.5 234.5V250.3M278.5 234.7V250.1M279.5 235.2V249.6M280.5 234.8V250.0M281.5 234.0V250.8M282.5 233.9V250.9M283.5 234.5V250.3M284.5 234.5V250.3M285.5 234.8V250.0M286.5 235.8V249.0M287.5 236.3V248.5M288.5 236.7V248.1M289.5 237.5V247.3M290.5 237.7V247.1M291.5 237.6V247.2M292.5 238.1V246.7M293.5 238.0V246.8M294.5 236.5V248.3M295.5 236.3V248.5M296.5 235.3V249.5M297.5 235.4V249.4M298.5 236.1V248.7M299.5 236.6V248.2M300.5 237.5V247.3M301.5 237.5V247.3M302.5 237.8V247.0M303.5 237.8V247.0M304.5 238.1V246.7M305.5 237.9V246.9M306.5 236.9V247.9M307.5 236.5V248.3M308.5 235.9V248.9M309.5 235.9V248.9M310.5 235.9V248.9M311.5 236.0V248.8M312.5 236.7V248.1M313.5 237.8V247.0M314.5 238.2V246.6M315.5 238.2V246.6M316.5 238.7V246.1M317.5 238.6V246.2M318.5 238.6V246.2M319.5 238.0V246.8M320.5 237.6V247.2M321.5 235.5V249.3M322.5 233.5V251.3M323.5 230.6V254.2M324.5 229.8V255.0M325.5 227.8V257.0M326.5 228.8V256.0M327.5 228.9V255.9M328.5 229.9V254.9M329.5 232.8V252.0M330.5 234.0V250.8M331.5 233.7V251.1M332.5 233.2V251.6M333.5 232.1V252.7M334.5 230.2V254.6M335.5 228.9V255.9M336.5 228.3V256.5M337.5 227.5V257.3M338.5 228.5V256.3M339.5 228.3V256.5M340.5 229.0V255.8M341.5 229.3V255.5M342.5 230.0V254.8M343.5 229.7V255.1M344.5 230.3V254.5M345.5 231.0V253.8M346.5 230.2V254.6M347.5 230.4V254.4M348.5 230.3V254.5M349.5 231.6V253.2M350.5 232.3V252.5M351.5 231.4V253.4M352.5 232.3V252.5M353.5 232.2V252.6M354.5 232.0V252.8M355.5 230.5V254.3M356.5 229.3V255.5M357.5 229.9V254.9M358.5 228.6V256.2M359.5 227.9V256.9M360.5 226.8V258.0M361.5 226.8V258.0M362.5 227.3V257.5M363.5 227.4V257.4M364.5 226.5V258.3M365.5 228.3V256.5M366.5 228.2V256.6M367.5 231.7V253.1M368.5 232.2V252.6M369.5 232.3V252.5M370.5 231.9V252.9M371.5 231.2V253.6M372.5 229.4V255.4M373.5 229.1V255.7M374.5 229.1V255.7M375.5 230.3V254.5M376.5 229.0V255.8M377.5 230.4V254.4M378.5 230.6V254.2M379.5 231.0V253.8M380.5 231.1V253.7M381.5 229.5V255.3M382.5 229.8V255.0M383.5 229.8V255.0M384.5 229.2V255.6M385.5 227.1V257.7M386.5 227.4V257.4M387.5 227.0V257.8M388.5 229.1V255.7M389.5 229.3V255.5M390.5 229.4V255.4M391.5 230.0V254.8M392.5 230.5V254.3M393.5 230.8V254.0M394.5 230.6V254.2M395.5 232.0V252.8M396.5 232.6V252.2M397.5 232.8V252.0M398.5 233.7V251.1M399.5 234.7V250.1M400.5 234.9V249.9M401.5 235.7V249.1M402.5 236.4V248.4M403.5 236.9V247.9M404.5 237.7V247.1M405.5 237.9V246.9M406.5 238.9V245.9M407.5 239.2V245.6M408.5 239.1V245.7M409.5 238.0V246.8M410.5 237.2V247.6M411.5 236.2V248.6M412.5 235.2V249.6M413.5 234.5V250.3M414.5 235.5V249.3M415.5 235.6V249.2M416.5 235.7V249.1M417.5 236.5V248.3M418.5 236.6V248.2M419.5 236.6V248.2M420.5 237.4V247.4M421.5 237.1V247.7M422.5 237.0V247.8M423.5 236.4V248.4M424.5 236.1V248.7M425.5 235.8V249.0M426.5 235.3V249.5M427.5 236.0V248.8M428.5 235.8V249.0M429.5 235.6V249.2M430.5 235.5V249.3M431.5 235.4V249.4M432.5 233.0V251.8M433.5 231.3V253.5M434.5 229.0V255.8M435.5 228.8V256.0M436.5 228.0V256.8M437.5 227.7V257.1M438.5 229.1V255.7M439.5 231.3V253.5M440.5 232.6V252.2M441.5 233.3V251.5M442.5 233.9V250.9M443.5 234.1V250.7M444.5 233.2V251.6M445.5 233.3V251.5M446.5 232.6V252.2M447.5 232.1V252.7M448.5 232.5V252.3M449.5 231.3V253.5M450.5 232.1V252.7M451.5 231.2V253.6M452.5 231.7V253.1M453.5 231.8V253.0M454.5 231.5V253.3M455.5 232.3V252.5M456.5 232.0V252.8M457.5 231.2V253.6M458.5 230.6V254.2M459.5 231.1V253.7M460.5 230.3V254.5M461.5 229.3V255.5M462.5 230.1V254.7M463.5 228.9V255.9M464.5 230.5V254.3M465.5 230.2V254.6M466.5 230.8V254.0M467.5 231.4V253.4M468.5 231.5V253.3M469.5 231.6V253.2M470.5 231.2V253.6M471.5 231.4V253.4M472.5 230.3V254.5M473.5 231.0V253.8M474.5 231.9V252.9M475.5 231.0V253.8M476.5 231.8V253.0M477.5 231.4V253.4M478.5 231.0V253.8M479.5 230.7V254.1M480.5 230.3V254.5M481.5 230.9V253.9M482.5 230.7V254.1M483.5 229.9V254.9M484.5 229.3V255.5M485.5 227.6V257.2M486.5 227.8V257.0M487.5 227.1V257.7M488.5 228.3V256.5M489.5 227.5V257.3M490.5 227.9V256.9M491.5 230.1V254.7M492.5 230.0V254.8M493.5 231.4V253.4M494.5 232.2V252.6M495.5 231.9V252.9M496.5 231.9V252.9M497.5 230.0V254.8M498.5 229.2V255.6M499.5 228.4V256.4M500.5 227.4V257.4M501.5 229.3V255.5M502.5 229.9V254.9M503.5 230.6V254.2M504.5 230.2V254.6M505.5 229.7V255.1M506.5 229.9V254.9M507.5 230.1V254.7M508.5 229.3V255.5M509.5 229.7V255.1M510.5 229.7V255.1M511.5 228.4V256.4M512.5 229.5V255.3M513.5 229.2V255.6M514.5 229.9V254.9M515.5 230.0V254.8M516.5 230.2V254.6M517.5 229.1V255.7M518.5 229.8V255.0M519.5 229.1V255.7M520.5 229.2V255.6M521.5 230.8V254.0M522.5 232.1V252.7M523.5 232.1V252.7M524.5 232.7V252.1M525.5 232.9V251.9M526.5 233.4V251.4M527.5 232.9V251.9M528.5 232.2V252.6M529.5 233.1V251.7M530.5 233.7V251.1M531.5 235.6V249.2M532.5 236.7V248.1M533.5 238.0V246.8M534.5 237.6V247.2M535.5 235.9V248.9M536.5 233.2V251.6M537.5 231.4V253.4M538.5 229.0V255.8M539.5 228.7V256.1M540.5 230.2V254.6M541.5 232.7V252.1M542.5 234.0V250.8M543.5 234.2V250.6M544.5 233.6V251.2M545.5 232.1V252.7M546.5 231.0V253.8M547.5 230.8V254.0M548.5 230.2V254.6M549.5 230.2V254.6M550.5 229.9V254.9M551.5 230.7V254.1M552.5 230.0V254.8M553.5 230.9V253.9M554.5 231.2V253.6M555.5 231.4V253.4M556.5 232.1V252.7M557.5 231.5V253.3M558.5 232.9V251.9M559.5 232.0V252.8M560.5 231.6V253.2M561.5 229.5V255.3M562.5 229.5V255.3M563.5 228.8V256.0M564.5 228.0V256.8M565.5 227.9V256.9M566.5 228.1V256.7M567.5 229.2V255.6M568.5 229.9V254.9M569.5 230.1V254.7M570.5 229.6V255.2M571.5 231.1V253.7M572.5 231.8V253.0M573.5 230.9V253.9M574.5 231.9V252.9M575.5 232.8V252.0M576.5 233.2V251.6M577.5 232.6V252.2M578.5 233.2V251.6M579.5 234.2V250.6M580.5 233.6V251.2M581.5 234.3V250.5M582.5 234.3V250.5M583.5 235.2V249.6M584.5 237.0V247.8M585.5 236.9V247.9M586.5 237.3V247.5M587.5 237.2V247.6M588.5 235.4V249.4M589.5 234.7V250.1M590.5 234.2V250.6M591.5 233.3V251.5M592.5 233.6V251.2M593.5 233.2V251.6M594.5 233.5V251.3M595.5 234.4V250.4M596.5 234.8V250.0M597.5 234.2V250.6M598.5 234.4V250.4M599.5 234.6V250.2M600.5 234.0V250.8M601.5 235.0V249.8M602.5 234.8V250.0M603.5 235.6V249.2M604.5 235.1V249.7M605.5 235.3V249.5M606.5 235.7V249.1M607.5 236.2V248.6M608.5 236.1V248.7M609.5 236.2V248.6M610.5 236.1V248.7M611.5 235.9V248.9M612.5 234.5V250.3M613.5 234.2V250.6M614.5 233.0V251.8M615.5 232.2V252.6M616.5 232.9V251.9M617.5 234.2V250.6M618.5 234.2V250.6M619.5 234.7V250.1M620.5 235.0V249.8M621.5 234.5V250.3M622.5 234.6V250.2M623.5 235.2V249.6M624.5 235.1V249.7M625.5 234.9V249.9M626.5 234.9V249.9M627.5 235.3V249.5M628.5 235.7V249.1M629.5 235.9V248.9M630.5 236.1V248.7M631.5 235.8V249.0M632.5 236.3V248.5M633.5 236.0V248.8M634.5 235.8V249.0M635.5 234.4V250.4M636.5 232.8V252.0M637.5 229.7V255.1M638.5 228.9V255.9M639.5 228.8V256.0M640.5 227.3V257.5M641.5 227.5V257.3M642.5 227.3V257.5M643.5 226.8V258.0M644.5 227.0V257.8M645.5 226.5V258.3M646.5 226.6V258.2M647.5 227.9V256.9M648.5 227.6V257.2M649.5 228.4V256.4M650.5 228.7V256.1M651.5 229.3V255.5M652.5 229.7V255.1M653.5 231.3V253.5M654.5 232.6V252.2M655.5 233.1V251.7M656.5 233.4V251.4M657.5 233.1V251.7M658.5 232.0V252.8M659.5 231.4V253.4M660.5 229.5V255.3M661.5 229.2V255.6M662.5 228.4V256.4M663.5 228.6V256.2M664.5 227.3V257.5M665.5 227.3V257.5M666.5 229.2V255.6M667.5 229.8V255.0M668.5 230.5V254.3M669.5 230.4V254.4M670.5 229.5V255.3M671.5 229.2V255.6M672.5 230.8V254.0M673.5 230.2V254.6M674.5 228.8V256.0M675.5 229.2V255.6M676.5 227.3V257.5M677.5 227.8V257.0M678.5 227.5V257.3M679.5 228.6V256.2M680.5 229.1V255.7M681.5 229.4V255.4M682.5 230.3V254.5M683.5 230.0V254.8M684.5 231.6V253.2M685.5 231.1V253.7M686.5 230.8V254.0M687.5 230.9V253.9M688.5 229.9V254.9M689.5 228.6V256.2M690.5 227.3V257.5M691.5 224.7V260.1M692.5 224.8V260.0M693.5 226.4V258.4M694.5 225.9V258.9M695.5 226.2V258.6M696.5 227.5V257.3M697.5 229.0V255.8M698.5 229.1V255.7M699.5 230.1V254.7M700.5 229.8V255.0M701.5 231.4V253.4M702.5 230.7V254.1M703.5 230.9V253.9M704.5 231.2V253.6M705.5 231.6V253.2M706.5 230.2V254.6M707.5 231.2V253.6M708.5 230.3V254.5M709.5 231.1V253.7M710.5 231.2V253.6M711.5 230.8V254.0M712.5 231.3V253.5M713.5 230.1V254.7M714.5 230.9V253.9M715.5 230.6V254.2M716.5 230.7V254.1M717.5 231.2V253.6M718.5 231.6V253.2M719.5 232.0V252.8M720.5 231.8V253.0M721.5 232.2V252.6M722.5 233.2V251.6M723.5 232.9V251.9M724.5 233.2V251.6M725.5 233.3V251.5M726.5 233.2V251.6M727.5 233.5V251.3M728.5 233.9V250.9M729.5 233.9V250.9M730.5 234.1V250.7M731.5 235.2V249.6M732.5 235.4V249.4M733.5 235.6V249.2M734.5 235.7V249.1M735.5 235.0V249.8M736.5 235.7V249.1M737.5 235.8V249.0M738.5 236.1V248.7M739.5 236.3V248.5M740.5 237.0V247.8M741.5 237.2V247.6M742.5 238.0V246.8M743.5 238.2V246.6M744.5 238.7V246.1M745.5 239.6V245.2M746.5 239.9V244.9M747.5 240.5V244.3M748.5 240.7V244.1M749.5 241.2V243.6M750.5 241.3V243.5M751.5 241.3V243.5M752.5 241.3V243.5M753.5 241.3V243.5M754.5 241.4V243.4M755.5 241.4V243.4M756.5 241.4V243.4M757.5 241.4V243.4M758.5 241.4V243.4M759.5 241.4V243.4M760.5 241.5V243.3M761.5 241.5V243.3M762.5 241.5V243.3M763.5 241.5V243.3M764.5 241.6V243.2M765.5 241.7V243.1M766.5 241.6V243.2M767.5 241.7V243.1M768.5 241.8V243.0M769.5 241.8V243.0M770.5 241.8V243.0M771.5 241.8V243.0M772.5 241.9V242.9" stroke="#6464dc"/></g><path d="M103.4 139V148M103.4 238V247" stroke="#c8c23c" stroke-width="0.9"/></svg>
<div style="left:775.8px;top:94.2px;width:11.2px;height:354px;background:#f5f4ee"></div>
<div style="left:776.6px;top:105px;width:9.6px;height:330.4px;background:linear-gradient(90deg,#ccdafd,#c3d3fb 50%,#bccdf8);border-radius:1.5px;border:0.5px solid #e4ecff"></div>
<div style="left:776.6px;top:94.8px;width:9.6px;height:9.6px;background:linear-gradient(135deg,#d0ddfd,#b9cbf7);border:0.5px solid #e6edff;border-radius:1.6px"></div>
<div style="left:776.6px;top:436.6px;width:9.6px;height:10.8px;background:linear-gradient(135deg,#d0ddfd,#b9cbf7);border:0.5px solid #e6edff;border-radius:1.6px"></div>
<svg style="left:776.6px;top:95px" width="9.6" height="9.4" viewBox="0 0 9.6 9.4"><path d="M2.4 5.8L4.8 3.4L7.2 5.8" stroke="#3a4c8c" stroke-width="1.2" fill="none"/></svg>
<svg style="left:776.6px;top:437.2px" width="9.6" height="9.8" viewBox="0 0 9.6 9.8"><path d="M2.4 3.8L4.8 6.2L7.2 3.8" stroke="#3a4c8c" stroke-width="1.2" fill="none"/></svg>
<div style="left:779.6px;top:267px;width:4.4px;height:5px;background:repeating-linear-gradient(#dfe9ff 0,#dfe9ff 0.7px,#a9bcf0 0.7px,#a9bcf0 1.4px,transparent 1.4px,transparent 2px);opacity:.7"></div>
<div style="left:13.5px;top:448px;width:773.5px;height:12px;background:#ece9d8"></div>
<div style="left:103px;top:448.4px;width:673px;height:10.6px;background:#f8f7f2"></div>
<div style="left:113.4px;top:448.8px;width:525.4px;height:9.8px;background:linear-gradient(#ccdafd,#c3d3fb 50%,#bccdf8);border-radius:1.5px;border:0.5px solid #e4ecff"></div>
<div style="left:103px;top:448.6px;width:10px;height:10.2px;background:linear-gradient(135deg,#d0ddfd,#b9cbf7);border:0.5px solid #e6edff;border-radius:1.6px"></div>
<div style="left:765.2px;top:448.6px;width:10px;height:10.2px;background:linear-gradient(135deg,#d0ddfd,#b9cbf7);border:0.5px solid #e6edff;border-radius:1.6px"></div>
<svg style="left:103.2px;top:448.8px" width="9.6" height="9.8" viewBox="0 0 9.6 9.8"><path d="M5.8 2.4L3.4 4.9L5.8 7.4" stroke="#3a4c8c" stroke-width="1.2" fill="none"/></svg>
<svg style="left:765.6px;top:448.8px" width="9.6" height="9.8" viewBox="0 0 9.6 9.8"><path d="M3.8 2.4L6.2 4.9L3.8 7.4" stroke="#3a4c8c" stroke-width="1.2" fill="none"/></svg>
<div style="left:373px;top:451.6px;width:5px;height:4.4px;background:repeating-linear-gradient(90deg,#dfe9ff 0,#dfe9ff 0.7px,#a9bcf0 0.7px,#a9bcf0 1.4px,transparent 1.4px,transparent 2px);opacity:.7"></div>
<div class="hl" style="left:13.5px;top:459.8px;width:773.5px;background:#c4c1b0"></div>
<div class="hl2" style="left:13.5px;top:460.8px;width:773.5px"></div>
<div class="grab" style="left:15px;top:463px;height:31px"></div>
<div style="left:20.2px;top:462px;width:1px;height:33px;background:#cfccbc"></div>
<div style="left:13.7px;top:462px;width:0.8px;height:33px;background:#cfccbc"></div>
<div class="t" style="left:21.6px;top:466.00px;font-size:8.2px;letter-spacing:-0.15px;-webkit-text-stroke:0;">Project Rate (Hz):</div>
<div style="left:21.6px;top:476.4px;width:51.4px;height:13.8px;background:#fff;border:0.8px solid #8aa2c8"></div>
<div class="t" style="left:25.4px;top:480.00px;font-size:8.1px;">44100</div>
<div style="left:63px;top:477.2px;width:9.2px;height:12.2px;background:linear-gradient(135deg,#d4e0fd,#b4c8f6);border-radius:1.4px"></div>
<svg style="left:63px;top:477.2px" width="9.2" height="12.2" viewBox="0 0 9.2 12.2"><path d="M2.2 4.8L4.6 7.4L7 4.8" stroke="#3a4c8c" stroke-width="1.3" fill="none"/></svg>
<div class="t" style="left:98.8px;top:466.00px;font-size:8.2px;letter-spacing:-0.15px;-webkit-text-stroke:0;">Selection Start:</div>
<div style="left:98.8px;top:476.2px;width:75.6px;height:12.8px;background:#c3c3c3;border:1px solid #706e64;border-right-color:#fafaf6;border-bottom-color:#fafaf6"></div>
<div style="left:100.19999999999999px;top:477.8px;width:12.4px;height:9.6px;background:#c9c9cc"></div>
<div class="t" style="left:100.6px;top:478.00px;font-size:9.6px;color:#3030c4;letter-spacing:0.55px;">00</div>
<div style="left:123.39999999999999px;top:477.8px;width:12.4px;height:9.6px;background:#c9c9cc"></div>
<div class="t" style="left:123.8px;top:478.00px;font-size:9.6px;color:#3030c4;letter-spacing:0.55px;">00</div>
<div style="left:148.29999999999998px;top:477.8px;width:12.4px;height:9.6px;background:#c9c9cc"></div>
<div class="t" style="left:148.7px;top:478.00px;font-size:9.6px;color:#3030c4;letter-spacing:0.55px;">00</div>
<div class="t" style="left:115.19999999999999px;top:478.00px;font-size:9.4px;color:#111;-webkit-text-stroke:0;">h</div>
<div class="t" style="left:138.6px;top:478.00px;font-size:9.4px;color:#111;-webkit-text-stroke:0;">m</div>
<div class="t" style="left:164.0px;top:478.00px;font-size:9.4px;color:#111;-webkit-text-stroke:0;">s</div>
<div style="left:168.7px;top:481px;width:0;height:0;border:2.3px solid transparent;border-top:3.2px solid #000;border-bottom:0"></div>
<div style="left:190px;top:476.2px;width:75.6px;height:12.8px;background:#c3c3c3;border:1px solid #706e64;border-right-color:#fafaf6;border-bottom-color:#fafaf6"></div>
<div style="left:191.4px;top:477.8px;width:12.4px;height:9.6px;background:#c9c9cc"></div>
<div class="t" style="left:191.8px;top:478.00px;font-size:9.6px;color:#3030c4;letter-spacing:0.55px;">00</div>
<div style="left:214.6px;top:477.8px;width:12.4px;height:9.6px;background:#c9c9cc"></div>
<div class="t" style="left:215px;top:478.00px;font-size:9.6px;color:#3030c4;letter-spacing:0.55px;">00</div>
<div style="left:239.5px;top:477.8px;width:12.4px;height:9.6px;background:#c9c9cc"></div>
<div class="t" style="left:239.9px;top:478.00px;font-size:9.6px;color:#3030c4;letter-spacing:0.55px;">00</div>
<div class="t" style="left:206.4px;top:478.00px;font-size:9.4px;color:#111;-webkit-text-stroke:0;">h</div>
<div class="t" style="left:229.8px;top:478.00px;font-size:9.4px;color:#111;-webkit-text-stroke:0;">m</div>
<div class="t" style="left:255.2px;top:478.00px;font-size:9.4px;color:#111;-webkit-text-stroke:0;">s</div>
<div style="left:259.9px;top:481px;width:0;height:0;border:2.3px solid transparent;border-top:3.2px solid #000;border-bottom:0"></div>
<div style="left:281px;top:476.2px;width:75.6px;height:12.8px;background:#c3c3c3;border:1px solid #706e64;border-right-color:#fafaf6;border-bottom-color:#fafaf6"></div>
<div style="left:282.40000000000003px;top:477.8px;width:12.4px;height:9.6px;background:#c9c9cc"></div>
<div class="t" style="left:282.8px;top:478.00px;font-size:9.6px;color:#3030c4;letter-spacing:0.55px;">00</div>
<div style="left:305.6px;top:477.8px;width:12.4px;height:9.6px;background:#c9c9cc"></div>
<div class="t" style="left:306px;top:478.00px;font-size:9.6px;color:#3030c4;letter-spacing:0.55px;">00</div>
<div style="left:330.5px;top:477.8px;width:12.4px;height:9.6px;background:#c9c9cc"></div>
<div class="t" style="left:330.9px;top:478.00px;font-size:9.6px;color:#3030c4;letter-spacing:0.55px;">00</div>
<div class="t" style="left:297.4px;top:478.00px;font-size:9.4px;color:#111;-webkit-text-stroke:0;">h</div>
<div class="t" style="left:320.8px;top:478.00px;font-size:9.4px;color:#111;-webkit-text-stroke:0;">m</div>
<div class="t" style="left:346.2px;top:478.00px;font-size:9.4px;color:#111;-webkit-text-stroke:0;">s</div>
<div style="left:350.9px;top:481px;width:0;height:0;border:2.3px solid transparent;border-top:3.2px solid #000;border-bottom:0"></div>
<div style="left:190px;top:465px;width:8.2px;height:8.2px;border-radius:50%;background:#fbfbf8;border:0.8px solid #35588c"></div>
<div style="left:192.5px;top:467.5px;width:3.2px;height:3.2px;border-radius:50%;background:#2eb02e"></div>
<div style="left:227.2px;top:465px;width:8.2px;height:8.2px;border-radius:50%;background:#fbfbf8;border:0.8px solid #35588c"></div>
<div class="t" style="left:200.4px;top:466.00px;font-size:8.2px;letter-spacing:-0.2px;-webkit-text-stroke:0;">End</div>
<div class="t" style="left:237.8px;top:466.00px;font-size:8.2px;letter-spacing:-0.2px;-webkit-text-stroke:0;">Length</div>
<div class="t" style="left:281px;top:466.00px;font-size:8.2px;letter-spacing:-0.15px;-webkit-text-stroke:0;">Audio Position:</div>
<div class="hl" style="left:13.2px;top:495.7px;width:773.8px;background:#b2af9e;height:1px"></div>
<div class="hl2" style="left:13.2px;top:496.7px;width:773.8px"></div>
<div style="left:13.8px;top:498.6px;width:17.4px;height:10.4px;background:#f1efe4"></div>
<div style="left:687.6px;top:499px;width:0.8px;height:10px;background:#c4c1b0"></div><div style="left:688.4px;top:499px;width:0.8px;height:10px;background:#fff"></div>
<div style="left:32px;top:499px;width:0.8px;height:10px;background:#dcd9c8"></div>
<svg style="left:778px;top:501px" width="9" height="9" viewBox="0 0 9 9"><path d="M8 2L2 8M8 5L5 8" stroke="#b8b5a4" stroke-width="1" stroke-dasharray="1 1"/></svg>
</div></body></html>
